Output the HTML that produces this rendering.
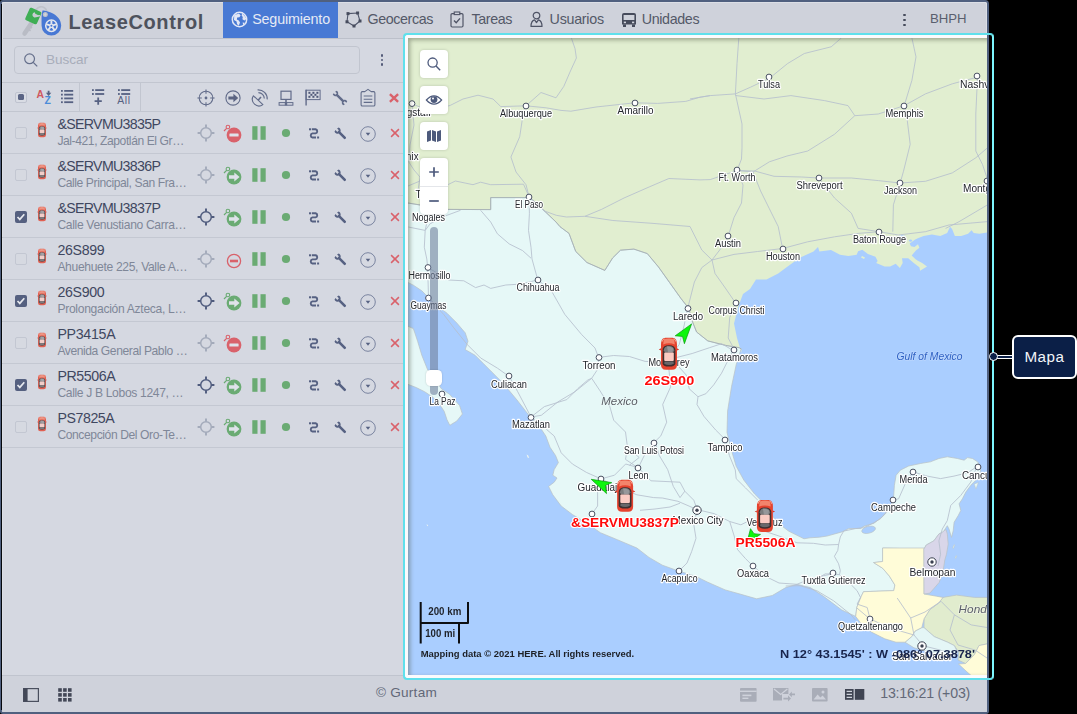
<!DOCTYPE html>
<html><head><meta charset="utf-8"><title>LeaseControl</title>
<style>
*{box-sizing:border-box;margin:0;padding:0}
html,body{width:1077px;height:714px;overflow:hidden;background:#000;font-family:"Liberation Sans",sans-serif;}
.t{position:absolute;white-space:nowrap;}
.a{position:absolute;}
#win{position:absolute;left:0;top:0;width:989px;height:714px;background:#d2d5de;border:2px solid #50607f;border-radius:3px 4px 3px 3px;overflow:hidden;}
#inner{position:absolute;left:-2px;top:-2px;width:989px;height:714px;}
svg{position:absolute;overflow:visible}
</style></head><body>
<div id="win"><div id="inner"><div class="a" style="left:2px;top:2px;width:985px;height:36px;background:#cfd2db"></div><div class="a" style="left:2px;top:38px;width:985px;height:1px;background:#bcc0ca"></div><div class="a" style="left:2px;top:39px;width:985px;height:636px;background:#d5d8e1"></div><div class="a" style="left:2px;top:2px;width:985px;height:710px;border:1px solid #dcdfe6;border-radius:2px"></div><svg style="left:15px;top:0px" width="50" height="40" viewBox="0 0 50 40"><path d="M16.4 23.2L9.6 33.6" stroke="#b9bcc5" stroke-width="4.6" stroke-linecap="round"/><path d="M13.4 29.4l2.2 1.4M15 26.8l2 1.3" stroke="#b9bcc5" stroke-width="1.8"/><path d="M20.6 13.6A5.7 5.7 0 0 1 31.8 11.4V15" fill="none" stroke="#bfc2ca" stroke-width="1.6"/><g transform="rotate(24 18.3 16)"><rect x="11.9" y="9.2" width="12.8" height="13.6" rx="1.6" fill="#3fae55"/></g><path d="M19.4 13.2a1.8 1.8 0 1 0 1.6 3.2l3.4 -.6" fill="#c9ccd4" stroke="#c9ccd4" stroke-width="1.6" stroke-linecap="round"/><path d="M27.5 10.4C33 10.6 46.2 14.6 46.2 25.8A9.8 9.8 0 0 1 26.6 25.8C26.6 20 26.2 14.5 27.5 10.4Z" fill="#4878d4"/><circle cx="30.3" cy="14.6" r="1.9" fill="#d0d3dc" stroke="#bfc2ca" stroke-width="1.2"/><circle cx="36.4" cy="25.8" r="5.7" fill="none" stroke="#e4e7ee" stroke-width="1.5"/><path d="M36.4 25.8L36.40 20.40M36.4 25.8L41.54 24.13M36.4 25.8L39.57 30.17M36.4 25.8L33.23 30.17M36.4 25.8L31.26 24.13" stroke="#e4e7ee" stroke-width="1.9"/><circle cx="36.4" cy="25.8" r="2.1" fill="#e4e7ee"/><circle cx="36.4" cy="25.8" r="1" fill="#4878d4"/></svg><div class="t" style="left:68.5px;top:12.1px;font-size:20px;line-height:20px;color:#4e525d;letter-spacing:0.642px;font-weight:bold;">LeaseControl</div><div class="a" style="left:223px;top:2px;width:115px;height:36px;background:#4879d4"></div><svg style="left:230.5px;top:11px" width="17" height="17" viewBox="0 0 17 17"><circle cx="8.5" cy="8.5" r="7.2" fill="none" stroke="#e3e8f6" stroke-width="1.5"/><path d="M3.2 4.2C5 3 6.6 3.4 8 2.6L9.6 4.4L8.4 6.2L6.2 6.6L5.8 8.6L7.8 9.4L9 11.6L7.8 14.8L6 13L5.6 10.6L3 9Z" fill="#e3e8f6"/><path d="M11.2 2.4L14 5.4L15.4 8L13.4 9.4L11.4 8.2L11.8 6L10.6 4.6Z" fill="#e3e8f6"/><path d="M11.6 11.4l2 .4l-1.2 2.6z" fill="#e3e8f6"/></svg><div class="t" style="left:252.2px;top:9.0px;font-size:14.3px;line-height:20px;color:#e6eaf5;letter-spacing:-0.154px;">Seguimiento</div><svg style="left:344.5px;top:10.5px" width="17" height="17" viewBox="0 0 17 17"><path d="M3 2.6L12.6 2L15 10L9 15L2 10.8Z" fill="none" stroke="#50566a" stroke-width="1.1"/><rect x="1.5" y="1.1" width="3" height="3" fill="#474c5e"/><rect x="11.1" y="0.5" width="3" height="3" fill="#474c5e"/><rect x="13.5" y="8.5" width="3" height="3" fill="#474c5e"/><rect x="7.5" y="13.5" width="3" height="3" fill="#474c5e"/><rect x="0.5" y="9.3" width="3" height="3" fill="#474c5e"/></svg><div class="t" style="left:367.5px;top:9.0px;font-size:14.3px;line-height:20px;color:#545968;letter-spacing:-0.405px;">Geocercas</div><svg style="left:450.3px;top:11px" width="14" height="17" viewBox="0 0 14 17"><path d="M4.4 2.6H2.2Q1 2.6 1 3.8V14.8Q1 16 2.2 16H11.8Q13 16 13 14.8V3.8Q13 2.6 11.8 2.6H9.6" fill="none" stroke="#4f5466" stroke-width="1.2"/><rect x="4.2" y="1" width="5.6" height="2.6" fill="none" stroke="#4f5466" stroke-width="1.1"/><path d="M4 9.6L6.2 11.8L10 7.4" fill="none" stroke="#4f5466" stroke-width="1.4"/></svg><div class="t" style="left:471.5px;top:9.0px;font-size:14.3px;line-height:20px;color:#545968;letter-spacing:-0.403px;">Tareas</div><svg style="left:530px;top:11.2px" width="13" height="17" viewBox="0 0 13 17"><circle cx="6.5" cy="4.6" r="3.3" fill="none" stroke="#4f5466" stroke-width="1.2"/><path d="M1 15.4C1 11 3 9.2 4.6 8.8L6.5 11.6L8.4 8.8C10 9.2 12 11 12 15.4Z" fill="none" stroke="#4f5466" stroke-width="1.2" stroke-linejoin="round"/></svg><div class="t" style="left:549.6px;top:9.0px;font-size:14.3px;line-height:20px;color:#545968;letter-spacing:-0.278px;">Usuarios</div><svg style="left:620.8px;top:12.4px" width="16" height="16" viewBox="0 0 16 16"><path d="M1 3Q1 1 3 1H13Q15 1 15 3V12.4H1Z" fill="#464b5b"/><rect x="2.6" y="3" width="10.8" height="5" fill="#cfd2db"/><rect x="2.8" y="9.6" width="2.2" height="1.6" fill="#cfd2db"/><rect x="11" y="9.6" width="2.2" height="1.6" fill="#cfd2db"/><rect x="2" y="12.4" width="3" height="2.6" fill="#464b5b"/><rect x="11" y="12.4" width="3" height="2.6" fill="#464b5b"/></svg><div class="t" style="left:641.8px;top:9.0px;font-size:14.3px;line-height:20px;color:#545968;letter-spacing:-0.377px;">Unidades</div><div class="a" style="left:903.2px;top:13.7px;width:2.6px;height:2.6px;border-radius:50%;background:#474c5c"></div><div class="a" style="left:903.2px;top:18.6px;width:2.6px;height:2.6px;border-radius:50%;background:#474c5c"></div><div class="a" style="left:903.2px;top:23.5px;width:2.6px;height:2.6px;border-radius:50%;background:#474c5c"></div><div class="t" style="left:930.0px;top:9.2px;font-size:13.2px;line-height:20px;color:#5a5f6e;letter-spacing:-0.044px;">BHPH</div><div class="a" style="left:14px;top:46px;width:346px;height:28px;border:1px solid #c1c5cf;border-radius:4px;background:#d5d8e1"></div><svg style="left:22px;top:51px" width="18" height="18" viewBox="0 0 18 18"><circle cx="7.6" cy="7.8" r="4.9" fill="none" stroke="#66708c" stroke-width="1.2"/><path d="M11.2 11.4L15.2 15.4" stroke="#66708c" stroke-width="1.3"/></svg><div class="t" style="left:46.0px;top:50.0px;font-size:13.6px;line-height:20px;color:#a8adba;letter-spacing:-0.054px;">Buscar</div><div class="a" style="left:380.9px;top:54.35px;width:2.3px;height:2.3px;border-radius:50%;background:#535b78"></div><div class="a" style="left:380.9px;top:58.85px;width:2.3px;height:2.3px;border-radius:50%;background:#535b78"></div><div class="a" style="left:380.9px;top:63.35px;width:2.3px;height:2.3px;border-radius:50%;background:#535b78"></div><div class="a" style="left:2px;top:82px;width:402px;height:1px;background:#c2c6d0"></div><div class="a" style="left:2px;top:111px;width:402px;height:1px;background:#c2c6d0"></div><div class="a" style="left:79px;top:83px;width:1px;height:28px;background:#c2c6d0"></div><div class="a" style="left:140px;top:83px;width:1px;height:28px;background:#c2c6d0"></div><div class="a" style="left:15.2px;top:91.5px;width:11.6px;height:11.6px;border-radius:2px;border:1px solid #bfc3cf;background:#d9dce4"></div><div class="a" style="left:18px;top:94.3px;width:6px;height:6px;border-radius:1.5px;background:#5a6484"></div><div class="t" style="left:36.4px;top:84.8px;font-size:10.4px;line-height:20px;color:#d0585f;letter-spacing:0.089px;font-weight:bold;">A</div><div class="t" style="left:44.6px;top:91.0px;font-size:10.4px;line-height:20px;color:#4a8bd8;letter-spacing:0.648px;font-weight:bold;">Z</div><svg style="left:44px;top:88px" width="10" height="10" viewBox="0 0 10 10"><path d="M4.6 2.8V5.4" stroke="#566182" stroke-width="1.8"/><path d="M1.9 4.8H7.3L4.6 7.9Z" fill="#566182"/></svg><svg style="left:61px;top:89.9px" width="13" height="14" viewBox="0 0 13 14"><rect x="0" y="0" width="1.8" height="1.8" fill="#566182"/><rect x="3.2" y="0" width="9" height="1.8" fill="#566182"/><rect x="0" y="3.75" width="1.8" height="1.8" fill="#566182"/><rect x="3.2" y="3.75" width="9" height="1.8" fill="#566182"/><rect x="0" y="7.5" width="1.8" height="1.8" fill="#566182"/><rect x="3.2" y="7.5" width="9" height="1.8" fill="#566182"/><rect x="0" y="11.3" width="1.8" height="1.8" fill="#566182"/><rect x="3.2" y="11.3" width="9" height="1.8" fill="#566182"/></svg><svg style="left:92px;top:88.9px" width="13" height="17" viewBox="0 0 13 17"><rect x="0" y="0.2" width="1.8" height="1.8" fill="#566182"/><rect x="3.2" y="0.2" width="9" height="1.8" fill="#566182"/><rect x="0" y="4.1" width="1.8" height="1.8" fill="#566182"/><rect x="3.2" y="4.1" width="9" height="1.8" fill="#566182"/><path d="M6.2 8.6V15.8M2.6 12.2H9.8" stroke="#566182" stroke-width="1.8"/></svg><svg style="left:117.6px;top:88.9px" width="13" height="17" viewBox="0 0 13 17"><rect x="0" y="0.2" width="1.8" height="1.8" fill="#566182"/><rect x="3.2" y="0.2" width="9" height="1.8" fill="#566182"/><rect x="0" y="4.1" width="1.8" height="1.8" fill="#566182"/><rect x="3.2" y="4.1" width="9" height="1.8" fill="#566182"/></svg><div class="t" style="left:117.3px;top:90.9px;font-size:10.4px;line-height:20px;color:#566182;letter-spacing:0.547px;">All</div><svg style="left:195.6px;top:87.7px" width="20" height="20" viewBox="-10 -10 20 20"><circle cx="0" cy="0" r="6.8" fill="none" stroke="#626c8a" stroke-width="1.1"/><path d="M-8.6 0H-4.2M4.2 0H8.6M0 -8.6V-4.2M0 4.2V8.6" stroke="#626c8a" stroke-width="1.1"/><circle cx="0" cy="0" r="1.4" fill="#626c8a"/></svg><svg style="left:222.6px;top:87.7px" width="20" height="20" viewBox="-10 -10 20 20"><circle r="7.1" fill="none" stroke="#626c8a" stroke-width="1.1"/><path d="M-4.6 -1.6H0.4V-4.3L5.2 0L0.4 4.3V1.6H-4.6Z" fill="#5b6482"/></svg><svg style="left:248.8px;top:87.7px" width="20" height="20" viewBox="-10 -10 20 20"><path d="M-5.6 -2.2 L3.9 6.6 A6.6 6.6 0 0 1 -5.6 -2.2Z" fill="none" stroke="#626c8a" stroke-width="1.1" stroke-linejoin="round"/><path d="M-0.9 2.2L2 -1" stroke="#626c8a" stroke-width="1.6"/><path d="M-0.6 -5.4A6 6 0 0 1 5.3 0.6" fill="none" stroke="#626c8a" stroke-width="1.2"/><path d="M-1.4 -8.2A9 9 0 0 1 8.2 1.4" fill="none" stroke="#626c8a" stroke-width="1.2"/></svg><svg style="left:276px;top:87.7px" width="20" height="20" viewBox="-10 -10 20 20"><rect x="-5" y="-6.8" width="10" height="8.2" fill="none" stroke="#626c8a" stroke-width="1.2"/><path d="M0 1.4V5" stroke="#626c8a" stroke-width="1.6"/><rect x="-6.9" y="4.6" width="13.8" height="2.6" fill="none" stroke="#626c8a" stroke-width="1"/><rect x="-1.2" y="4.4" width="2.4" height="3" fill="#626c8a"/></svg><svg style="left:302.6px;top:87.7px" width="20" height="20" viewBox="-10 -10 20 20"><path d="M-6.9 -8.3V7.4" stroke="#626c8a" stroke-width="1.4"/><rect x="-6.9" y="-7.8" width="14" height="9.4" fill="none" stroke="#626c8a" stroke-width="1"/><rect x="-4.6" y="-6.2" width="2" height="2" fill="#4f5878"/><rect x="-0.6" y="-6.2" width="2" height="2" fill="#4f5878"/><rect x="3.4" y="-6.2" width="2" height="2" fill="#4f5878"/><rect x="-2.6" y="-4.2" width="2" height="2" fill="#4f5878"/><rect x="1.4" y="-4.2" width="2" height="2" fill="#4f5878"/><rect x="-4.6" y="-2.2" width="2" height="2" fill="#4f5878"/><rect x="-0.6" y="-2.2" width="2" height="2" fill="#4f5878"/><rect x="3.4" y="-2.2" width="2" height="2" fill="#4f5878"/></svg><svg style="left:330.2px;top:87.5px" width="20" height="20" viewBox="-10 -10 20 20"><g transform="rotate(-45) scale(.8)"><rect x="-1.5" y="-6" width="3" height="12" fill="#626c8a"/><path d="M-3.4 -9.4 A3.6 3.6 0 1 0 3.4 -9.4 L1.3 -9.9 V-6.9 H-1.3 V-9.9Z" fill="#626c8a"/><path d="M-3.4 9.4 A3.6 3.6 0 1 1 3.4 9.4 L1.3 9.9 V6.9 H-1.3 V9.9Z" fill="#626c8a"/></g></svg><svg style="left:357.6px;top:87.7px" width="20" height="20" viewBox="-10 -10 20 20"><path d="M-3.2 -6.4H-5.6Q-6.9 -6.4 -6.9 -5.1V6.7Q-6.9 8 -5.6 8H5.6Q6.9 8 6.9 6.7V-5.1Q6.9 -6.4 5.6 -6.4H3.2L0 -8.6Z" fill="none" stroke="#626c8a" stroke-width="1.1" stroke-linejoin="round"/><path d="M-4.3 -2H4.3M-4.3 1.2H4.3M-4.3 4.4H4.3" stroke="#626c8a" stroke-width="1.1"/></svg><svg style="left:384px;top:87.7px" width="20" height="20" viewBox="-10 -10 20 20"><path d="M-4.1 -3.9L4.1 3.9M4.1 -3.9L-4.1 3.9" stroke="#d9626b" stroke-width="2.4"/></svg><div class="a" style="left:2px;top:153px;width:402px;height:1px;background:#c4c8d2"></div><div class="a" style="left:15.2px;top:127px;width:11.6px;height:11.6px;border-radius:2px;border:1px solid #c3c7d2;background:#d6d9e1"></div><svg style="left:35px;top:121px;opacity:.8" width="14" height="18" viewBox="-7 -9 14 18"><g transform="scale(.5 .45)"><g transform="translate(0 0)"><path d="M-8 -9.5Q-8 -16 -3.5 -16H3.5Q8 -16 8 -9.5V11Q8 16 3 16H-3Q-8 16 -8 11Z" fill="#e5432f"/><path d="M-5.2 -14.6Q0 -16.2 5.2 -14.6L5.8 -9.4Q0 -11.8 -5.8 -9.4Z" fill="#f3846c"/><path d="M-8 -5.6L-10.2 -4.4L-8 -3.4Z M8 -5.6L10.2 -4.4L8 -3.4Z" fill="#d6382a"/><path d="M-6.4 -4Q-6.4 -8.4 0 -8.6Q6.4 -8.4 6.4 -4V9.6Q6.4 12.6 0 12.8Q-6.4 12.6 -6.4 9.6Z" fill="#3d2f30"/><path d="M-5.2 -3.6Q-4.6 -7.6 0 -7.7Q4.6 -7.6 5.2 -3.6L4.2 -1.2H-4.2Z" fill="#7c7c7e"/><path d="M-2 -7.2Q2 -7.4 4.2 -5.4L3.4 -1.6H-1Z" fill="#97979a"/><rect x="-4.8" y="-1.2" width="9.6" height="8.4" rx="1" fill="#fbcbc3"/><path d="M-4.4 7.6H4.4L4.8 10Q0 12.6 -4.8 10Z" fill="#68686b"/><path d="M-7 -12Q-6.6 -14.4 -4.6 -15M7 -12Q6.6 -14.4 4.6 -15" fill="none" stroke="#f6a08c" stroke-width="1"/></g></g></svg><div class="t" style="left:57.4px;top:113.8px;font-size:14.2px;line-height:20px;color:#3f4760;letter-spacing:-0.669px;">&amp;SERVMU3835P</div><div class="t" style="left:57.4px;top:130.8px;font-size:12.1px;line-height:20px;color:#7f8798;letter-spacing:-0.417px;">Jal-421, Zapotlán El Gr…</div><svg style="left:195.6px;top:122.9px" width="20" height="20" viewBox="-10 -10 20 20"><circle cx="0" cy="0" r="5.3" fill="none" stroke="#a3aaba" stroke-width="1.5"/><path d="M-8.4 0H-5.6M5.6 0H8.4M0 -8.4V-5.6M0 5.6V8.4" stroke="#a3aaba" stroke-width="1.9"/></svg><svg style="left:222px;top:122.9px" width="24" height="24" viewBox="-12 -12 24 24"><circle r="7.4" fill="#d9626b"/><rect x="-4.6" y="-1.6" width="9.2" height="3.2" rx=".6" fill="#dfe2ea"/><circle cx="-6.1" cy="-8" r="1.8" fill="none" stroke="#d9626b" stroke-width="1.1"/><path d="M-7.4 -6.6L-10 -4" stroke="#d9626b" stroke-width="1.2"/></svg><svg style="left:249.4px;top:122.6px" width="20" height="20" viewBox="-10 -10 20 20"><rect x="-6.7" y="-6.8" width="5.2" height="13.6" fill="#6aab73"/><rect x="1.5" y="-6.8" width="5.2" height="13.6" fill="#6aab73"/></svg><svg style="left:276px;top:122.6px" width="20" height="20" viewBox="-10 -10 20 20"><circle r="4.1" fill="#6aab73"/></svg><svg style="left:304px;top:122.6px" width="20" height="20" viewBox="-10 -10 20 20"><path d="M-2.2 -3.7H1.6A2.1 2.1 0 0 1 1.6 0.4H-1.6A2.1 2.1 0 0 0 -1.6 4.5H2" fill="none" stroke="#566182" stroke-width="1.9"/><rect x="-5" y="-4.7" width="2" height="2" fill="#566182"/><rect x="3.1" y="3.5" width="2" height="2" fill="#566182"/></svg><svg style="left:330.6px;top:124.1px" width="20" height="20" viewBox="-10 -10 20 20"><g transform="rotate(-45) scale(.93)"><rect x="-1.4" y="-3" width="2.8" height="10" rx="1.2" fill="#566182"/><path d="M-3.3 -6.6 A3.5 3.5 0 1 0 3.3 -6.6 L1.2 -7.2 V-4.4 H-1.2 V-7.2Z" fill="#566182"/></g></svg><svg style="left:358px;top:123.5px" width="20" height="20" viewBox="-10 -10 20 20"><circle r="7.3" fill="none" stroke="#7a84a0" stroke-width="1"/><path d="M-2.3 -1.2H2.3L0 1.8Z" fill="#566182"/></svg><svg style="left:385px;top:123.3px" width="20" height="20" viewBox="-10 -10 20 20"><path d="M-3.9 -3.9L3.9 3.9M3.9 -3.9L-3.9 3.9" stroke="#d9626b" stroke-width="1.5"/></svg><div class="a" style="left:2px;top:195px;width:402px;height:1px;background:#c4c8d2"></div><div class="a" style="left:15.2px;top:169px;width:11.6px;height:11.6px;border-radius:2px;border:1px solid #c3c7d2;background:#d6d9e1"></div><svg style="left:35px;top:163px;opacity:.8" width="14" height="18" viewBox="-7 -9 14 18"><g transform="scale(.5 .45)"><g transform="translate(0 0)"><path d="M-8 -9.5Q-8 -16 -3.5 -16H3.5Q8 -16 8 -9.5V11Q8 16 3 16H-3Q-8 16 -8 11Z" fill="#e5432f"/><path d="M-5.2 -14.6Q0 -16.2 5.2 -14.6L5.8 -9.4Q0 -11.8 -5.8 -9.4Z" fill="#f3846c"/><path d="M-8 -5.6L-10.2 -4.4L-8 -3.4Z M8 -5.6L10.2 -4.4L8 -3.4Z" fill="#d6382a"/><path d="M-6.4 -4Q-6.4 -8.4 0 -8.6Q6.4 -8.4 6.4 -4V9.6Q6.4 12.6 0 12.8Q-6.4 12.6 -6.4 9.6Z" fill="#3d2f30"/><path d="M-5.2 -3.6Q-4.6 -7.6 0 -7.7Q4.6 -7.6 5.2 -3.6L4.2 -1.2H-4.2Z" fill="#7c7c7e"/><path d="M-2 -7.2Q2 -7.4 4.2 -5.4L3.4 -1.6H-1Z" fill="#97979a"/><rect x="-4.8" y="-1.2" width="9.6" height="8.4" rx="1" fill="#fbcbc3"/><path d="M-4.4 7.6H4.4L4.8 10Q0 12.6 -4.8 10Z" fill="#68686b"/><path d="M-7 -12Q-6.6 -14.4 -4.6 -15M7 -12Q6.6 -14.4 4.6 -15" fill="none" stroke="#f6a08c" stroke-width="1"/></g></g></svg><div class="t" style="left:57.4px;top:155.8px;font-size:14.2px;line-height:20px;color:#3f4760;letter-spacing:-0.669px;">&amp;SERVMU3836P</div><div class="t" style="left:57.4px;top:172.8px;font-size:12.1px;line-height:20px;color:#7f8798;letter-spacing:-0.408px;">Calle Principal, San Fra…</div><svg style="left:195.6px;top:164.9px" width="20" height="20" viewBox="-10 -10 20 20"><circle cx="0" cy="0" r="5.3" fill="none" stroke="#a3aaba" stroke-width="1.5"/><path d="M-8.4 0H-5.6M5.6 0H8.4M0 -8.4V-5.6M0 5.6V8.4" stroke="#a3aaba" stroke-width="1.9"/></svg><svg style="left:222px;top:164.9px" width="24" height="24" viewBox="-12 -12 24 24"><circle r="7.4" fill="#6aab73"/><path d="M-5 -1.8H0.3V-4.6L5.6 0L0.3 4.6V1.8H-5Z" fill="#dfe2ea"/><circle cx="-6.1" cy="-8" r="1.8" fill="none" stroke="#6aab73" stroke-width="1.1"/><path d="M-7.4 -6.6L-10 -4" stroke="#6aab73" stroke-width="1.2"/></svg><svg style="left:249.4px;top:164.6px" width="20" height="20" viewBox="-10 -10 20 20"><rect x="-6.7" y="-6.8" width="5.2" height="13.6" fill="#6aab73"/><rect x="1.5" y="-6.8" width="5.2" height="13.6" fill="#6aab73"/></svg><svg style="left:276px;top:164.6px" width="20" height="20" viewBox="-10 -10 20 20"><circle r="4.1" fill="#6aab73"/></svg><svg style="left:304px;top:164.6px" width="20" height="20" viewBox="-10 -10 20 20"><path d="M-2.2 -3.7H1.6A2.1 2.1 0 0 1 1.6 0.4H-1.6A2.1 2.1 0 0 0 -1.6 4.5H2" fill="none" stroke="#566182" stroke-width="1.9"/><rect x="-5" y="-4.7" width="2" height="2" fill="#566182"/><rect x="3.1" y="3.5" width="2" height="2" fill="#566182"/></svg><svg style="left:330.6px;top:166.1px" width="20" height="20" viewBox="-10 -10 20 20"><g transform="rotate(-45) scale(.93)"><rect x="-1.4" y="-3" width="2.8" height="10" rx="1.2" fill="#566182"/><path d="M-3.3 -6.6 A3.5 3.5 0 1 0 3.3 -6.6 L1.2 -7.2 V-4.4 H-1.2 V-7.2Z" fill="#566182"/></g></svg><svg style="left:358px;top:165.5px" width="20" height="20" viewBox="-10 -10 20 20"><circle r="7.3" fill="none" stroke="#7a84a0" stroke-width="1"/><path d="M-2.3 -1.2H2.3L0 1.8Z" fill="#566182"/></svg><svg style="left:385px;top:165.3px" width="20" height="20" viewBox="-10 -10 20 20"><path d="M-3.9 -3.9L3.9 3.9M3.9 -3.9L-3.9 3.9" stroke="#d9626b" stroke-width="1.5"/></svg><div class="a" style="left:2px;top:237px;width:402px;height:1px;background:#c4c8d2"></div><div class="a" style="left:15.2px;top:211px;width:11.6px;height:11.6px;border-radius:2px;background:#556080"></div><svg style="left:15.2px;top:211px" width="12" height="12" viewBox="0 0 12 12"><path d="M2.5 6L4.8 8.4L9.3 3.3" fill="none" stroke="#e6e8ee" stroke-width="1.7"/></svg><svg style="left:35px;top:205px;opacity:.8" width="14" height="18" viewBox="-7 -9 14 18"><g transform="scale(.5 .45)"><g transform="translate(0 0)"><path d="M-8 -9.5Q-8 -16 -3.5 -16H3.5Q8 -16 8 -9.5V11Q8 16 3 16H-3Q-8 16 -8 11Z" fill="#e5432f"/><path d="M-5.2 -14.6Q0 -16.2 5.2 -14.6L5.8 -9.4Q0 -11.8 -5.8 -9.4Z" fill="#f3846c"/><path d="M-8 -5.6L-10.2 -4.4L-8 -3.4Z M8 -5.6L10.2 -4.4L8 -3.4Z" fill="#d6382a"/><path d="M-6.4 -4Q-6.4 -8.4 0 -8.6Q6.4 -8.4 6.4 -4V9.6Q6.4 12.6 0 12.8Q-6.4 12.6 -6.4 9.6Z" fill="#3d2f30"/><path d="M-5.2 -3.6Q-4.6 -7.6 0 -7.7Q4.6 -7.6 5.2 -3.6L4.2 -1.2H-4.2Z" fill="#7c7c7e"/><path d="M-2 -7.2Q2 -7.4 4.2 -5.4L3.4 -1.6H-1Z" fill="#97979a"/><rect x="-4.8" y="-1.2" width="9.6" height="8.4" rx="1" fill="#fbcbc3"/><path d="M-4.4 7.6H4.4L4.8 10Q0 12.6 -4.8 10Z" fill="#68686b"/><path d="M-7 -12Q-6.6 -14.4 -4.6 -15M7 -12Q6.6 -14.4 4.6 -15" fill="none" stroke="#f6a08c" stroke-width="1"/></g></g></svg><div class="t" style="left:57.4px;top:197.8px;font-size:14.2px;line-height:20px;color:#3f4760;letter-spacing:-0.669px;">&amp;SERVMU3837P</div><div class="t" style="left:57.4px;top:214.8px;font-size:12.1px;line-height:20px;color:#7f8798;letter-spacing:-0.327px;">Calle Venustiano Carra…</div><svg style="left:195.6px;top:206.9px" width="20" height="20" viewBox="-10 -10 20 20"><circle cx="0" cy="0" r="5.3" fill="none" stroke="#4f5b7d" stroke-width="1.5"/><path d="M-8.4 0H-5.6M5.6 0H8.4M0 -8.4V-5.6M0 5.6V8.4" stroke="#4f5b7d" stroke-width="1.9"/></svg><svg style="left:222px;top:206.9px" width="24" height="24" viewBox="-12 -12 24 24"><circle r="7.4" fill="#6aab73"/><path d="M-5 -1.8H0.3V-4.6L5.6 0L0.3 4.6V1.8H-5Z" fill="#dfe2ea"/><circle cx="-6.1" cy="-8" r="1.8" fill="none" stroke="#6aab73" stroke-width="1.1"/><path d="M-7.4 -6.6L-10 -4" stroke="#6aab73" stroke-width="1.2"/></svg><svg style="left:249.4px;top:206.6px" width="20" height="20" viewBox="-10 -10 20 20"><rect x="-6.7" y="-6.8" width="5.2" height="13.6" fill="#6aab73"/><rect x="1.5" y="-6.8" width="5.2" height="13.6" fill="#6aab73"/></svg><svg style="left:276px;top:206.6px" width="20" height="20" viewBox="-10 -10 20 20"><circle r="4.1" fill="#6aab73"/></svg><svg style="left:304px;top:206.6px" width="20" height="20" viewBox="-10 -10 20 20"><path d="M-2.2 -3.7H1.6A2.1 2.1 0 0 1 1.6 0.4H-1.6A2.1 2.1 0 0 0 -1.6 4.5H2" fill="none" stroke="#566182" stroke-width="1.9"/><rect x="-5" y="-4.7" width="2" height="2" fill="#566182"/><rect x="3.1" y="3.5" width="2" height="2" fill="#566182"/></svg><svg style="left:330.6px;top:208.1px" width="20" height="20" viewBox="-10 -10 20 20"><g transform="rotate(-45) scale(.93)"><rect x="-1.4" y="-3" width="2.8" height="10" rx="1.2" fill="#566182"/><path d="M-3.3 -6.6 A3.5 3.5 0 1 0 3.3 -6.6 L1.2 -7.2 V-4.4 H-1.2 V-7.2Z" fill="#566182"/></g></svg><svg style="left:358px;top:207.5px" width="20" height="20" viewBox="-10 -10 20 20"><circle r="7.3" fill="none" stroke="#7a84a0" stroke-width="1"/><path d="M-2.3 -1.2H2.3L0 1.8Z" fill="#566182"/></svg><svg style="left:385px;top:207.3px" width="20" height="20" viewBox="-10 -10 20 20"><path d="M-3.9 -3.9L3.9 3.9M3.9 -3.9L-3.9 3.9" stroke="#d9626b" stroke-width="1.5"/></svg><div class="a" style="left:2px;top:279px;width:402px;height:1px;background:#c4c8d2"></div><div class="a" style="left:15.2px;top:253px;width:11.6px;height:11.6px;border-radius:2px;border:1px solid #c3c7d2;background:#d6d9e1"></div><svg style="left:35px;top:247px;opacity:.8" width="14" height="18" viewBox="-7 -9 14 18"><g transform="scale(.5 .45)"><g transform="translate(0 0)"><path d="M-8 -9.5Q-8 -16 -3.5 -16H3.5Q8 -16 8 -9.5V11Q8 16 3 16H-3Q-8 16 -8 11Z" fill="#e5432f"/><path d="M-5.2 -14.6Q0 -16.2 5.2 -14.6L5.8 -9.4Q0 -11.8 -5.8 -9.4Z" fill="#f3846c"/><path d="M-8 -5.6L-10.2 -4.4L-8 -3.4Z M8 -5.6L10.2 -4.4L8 -3.4Z" fill="#d6382a"/><path d="M-6.4 -4Q-6.4 -8.4 0 -8.6Q6.4 -8.4 6.4 -4V9.6Q6.4 12.6 0 12.8Q-6.4 12.6 -6.4 9.6Z" fill="#3d2f30"/><path d="M-5.2 -3.6Q-4.6 -7.6 0 -7.7Q4.6 -7.6 5.2 -3.6L4.2 -1.2H-4.2Z" fill="#7c7c7e"/><path d="M-2 -7.2Q2 -7.4 4.2 -5.4L3.4 -1.6H-1Z" fill="#97979a"/><rect x="-4.8" y="-1.2" width="9.6" height="8.4" rx="1" fill="#fbcbc3"/><path d="M-4.4 7.6H4.4L4.8 10Q0 12.6 -4.8 10Z" fill="#68686b"/><path d="M-7 -12Q-6.6 -14.4 -4.6 -15M7 -12Q6.6 -14.4 4.6 -15" fill="none" stroke="#f6a08c" stroke-width="1"/></g></g></svg><div class="t" style="left:57.4px;top:239.8px;font-size:14.2px;line-height:20px;color:#3f4760;letter-spacing:-0.326px;">26S899</div><div class="t" style="left:57.4px;top:256.8px;font-size:12.1px;line-height:20px;color:#7f8798;letter-spacing:-0.334px;">Ahuehuete 225, Valle A…</div><svg style="left:195.6px;top:248.9px" width="20" height="20" viewBox="-10 -10 20 20"><circle cx="0" cy="0" r="5.3" fill="none" stroke="#a3aaba" stroke-width="1.5"/><path d="M-8.4 0H-5.6M5.6 0H8.4M0 -8.4V-5.6M0 5.6V8.4" stroke="#a3aaba" stroke-width="1.9"/></svg><svg style="left:222px;top:248.9px" width="24" height="24" viewBox="-12 -12 24 24"><circle r="6.6" fill="none" stroke="#d9626b" stroke-width="1.3"/><rect x="-4" y="-1.3" width="8" height="2.6" fill="#d9626b"/></svg><svg style="left:249.4px;top:248.6px" width="20" height="20" viewBox="-10 -10 20 20"><rect x="-6.7" y="-6.8" width="5.2" height="13.6" fill="#6aab73"/><rect x="1.5" y="-6.8" width="5.2" height="13.6" fill="#6aab73"/></svg><svg style="left:276px;top:248.6px" width="20" height="20" viewBox="-10 -10 20 20"><circle r="4.1" fill="#6aab73"/></svg><svg style="left:304px;top:248.6px" width="20" height="20" viewBox="-10 -10 20 20"><path d="M-2.2 -3.7H1.6A2.1 2.1 0 0 1 1.6 0.4H-1.6A2.1 2.1 0 0 0 -1.6 4.5H2" fill="none" stroke="#566182" stroke-width="1.9"/><rect x="-5" y="-4.7" width="2" height="2" fill="#566182"/><rect x="3.1" y="3.5" width="2" height="2" fill="#566182"/></svg><svg style="left:330.6px;top:250.1px" width="20" height="20" viewBox="-10 -10 20 20"><g transform="rotate(-45) scale(.93)"><rect x="-1.4" y="-3" width="2.8" height="10" rx="1.2" fill="#566182"/><path d="M-3.3 -6.6 A3.5 3.5 0 1 0 3.3 -6.6 L1.2 -7.2 V-4.4 H-1.2 V-7.2Z" fill="#566182"/></g></svg><svg style="left:358px;top:249.5px" width="20" height="20" viewBox="-10 -10 20 20"><circle r="7.3" fill="none" stroke="#7a84a0" stroke-width="1"/><path d="M-2.3 -1.2H2.3L0 1.8Z" fill="#566182"/></svg><svg style="left:385px;top:249.3px" width="20" height="20" viewBox="-10 -10 20 20"><path d="M-3.9 -3.9L3.9 3.9M3.9 -3.9L-3.9 3.9" stroke="#d9626b" stroke-width="1.5"/></svg><div class="a" style="left:2px;top:321px;width:402px;height:1px;background:#c4c8d2"></div><div class="a" style="left:15.2px;top:295px;width:11.6px;height:11.6px;border-radius:2px;background:#556080"></div><svg style="left:15.2px;top:295px" width="12" height="12" viewBox="0 0 12 12"><path d="M2.5 6L4.8 8.4L9.3 3.3" fill="none" stroke="#e6e8ee" stroke-width="1.7"/></svg><svg style="left:35px;top:289px;opacity:.8" width="14" height="18" viewBox="-7 -9 14 18"><g transform="scale(.5 .45)"><g transform="translate(0 0)"><path d="M-8 -9.5Q-8 -16 -3.5 -16H3.5Q8 -16 8 -9.5V11Q8 16 3 16H-3Q-8 16 -8 11Z" fill="#e5432f"/><path d="M-5.2 -14.6Q0 -16.2 5.2 -14.6L5.8 -9.4Q0 -11.8 -5.8 -9.4Z" fill="#f3846c"/><path d="M-8 -5.6L-10.2 -4.4L-8 -3.4Z M8 -5.6L10.2 -4.4L8 -3.4Z" fill="#d6382a"/><path d="M-6.4 -4Q-6.4 -8.4 0 -8.6Q6.4 -8.4 6.4 -4V9.6Q6.4 12.6 0 12.8Q-6.4 12.6 -6.4 9.6Z" fill="#3d2f30"/><path d="M-5.2 -3.6Q-4.6 -7.6 0 -7.7Q4.6 -7.6 5.2 -3.6L4.2 -1.2H-4.2Z" fill="#7c7c7e"/><path d="M-2 -7.2Q2 -7.4 4.2 -5.4L3.4 -1.6H-1Z" fill="#97979a"/><rect x="-4.8" y="-1.2" width="9.6" height="8.4" rx="1" fill="#fbcbc3"/><path d="M-4.4 7.6H4.4L4.8 10Q0 12.6 -4.8 10Z" fill="#68686b"/><path d="M-7 -12Q-6.6 -14.4 -4.6 -15M7 -12Q6.6 -14.4 4.6 -15" fill="none" stroke="#f6a08c" stroke-width="1"/></g></g></svg><div class="t" style="left:57.4px;top:281.8px;font-size:14.2px;line-height:20px;color:#3f4760;letter-spacing:-0.326px;">26S900</div><div class="t" style="left:57.4px;top:298.8px;font-size:12.1px;line-height:20px;color:#7f8798;letter-spacing:-0.298px;">Prolongación Azteca, L…</div><svg style="left:195.6px;top:290.9px" width="20" height="20" viewBox="-10 -10 20 20"><circle cx="0" cy="0" r="5.3" fill="none" stroke="#4f5b7d" stroke-width="1.5"/><path d="M-8.4 0H-5.6M5.6 0H8.4M0 -8.4V-5.6M0 5.6V8.4" stroke="#4f5b7d" stroke-width="1.9"/></svg><svg style="left:222px;top:290.9px" width="24" height="24" viewBox="-12 -12 24 24"><circle r="7.4" fill="#6aab73"/><path d="M-5 -1.8H0.3V-4.6L5.6 0L0.3 4.6V1.8H-5Z" fill="#dfe2ea"/><circle cx="-6.1" cy="-8" r="1.8" fill="none" stroke="#6aab73" stroke-width="1.1"/><path d="M-7.4 -6.6L-10 -4" stroke="#6aab73" stroke-width="1.2"/></svg><svg style="left:249.4px;top:290.6px" width="20" height="20" viewBox="-10 -10 20 20"><rect x="-6.7" y="-6.8" width="5.2" height="13.6" fill="#6aab73"/><rect x="1.5" y="-6.8" width="5.2" height="13.6" fill="#6aab73"/></svg><svg style="left:276px;top:290.6px" width="20" height="20" viewBox="-10 -10 20 20"><circle r="4.1" fill="#6aab73"/></svg><svg style="left:304px;top:290.6px" width="20" height="20" viewBox="-10 -10 20 20"><path d="M-2.2 -3.7H1.6A2.1 2.1 0 0 1 1.6 0.4H-1.6A2.1 2.1 0 0 0 -1.6 4.5H2" fill="none" stroke="#566182" stroke-width="1.9"/><rect x="-5" y="-4.7" width="2" height="2" fill="#566182"/><rect x="3.1" y="3.5" width="2" height="2" fill="#566182"/></svg><svg style="left:330.6px;top:292.1px" width="20" height="20" viewBox="-10 -10 20 20"><g transform="rotate(-45) scale(.93)"><rect x="-1.4" y="-3" width="2.8" height="10" rx="1.2" fill="#566182"/><path d="M-3.3 -6.6 A3.5 3.5 0 1 0 3.3 -6.6 L1.2 -7.2 V-4.4 H-1.2 V-7.2Z" fill="#566182"/></g></svg><svg style="left:358px;top:291.5px" width="20" height="20" viewBox="-10 -10 20 20"><circle r="7.3" fill="none" stroke="#7a84a0" stroke-width="1"/><path d="M-2.3 -1.2H2.3L0 1.8Z" fill="#566182"/></svg><svg style="left:385px;top:291.3px" width="20" height="20" viewBox="-10 -10 20 20"><path d="M-3.9 -3.9L3.9 3.9M3.9 -3.9L-3.9 3.9" stroke="#d9626b" stroke-width="1.5"/></svg><div class="a" style="left:2px;top:363px;width:402px;height:1px;background:#c4c8d2"></div><div class="a" style="left:15.2px;top:337px;width:11.6px;height:11.6px;border-radius:2px;border:1px solid #c3c7d2;background:#d6d9e1"></div><svg style="left:35px;top:331px;opacity:.8" width="14" height="18" viewBox="-7 -9 14 18"><g transform="scale(.5 .45)"><g transform="translate(0 0)"><path d="M-8 -9.5Q-8 -16 -3.5 -16H3.5Q8 -16 8 -9.5V11Q8 16 3 16H-3Q-8 16 -8 11Z" fill="#e5432f"/><path d="M-5.2 -14.6Q0 -16.2 5.2 -14.6L5.8 -9.4Q0 -11.8 -5.8 -9.4Z" fill="#f3846c"/><path d="M-8 -5.6L-10.2 -4.4L-8 -3.4Z M8 -5.6L10.2 -4.4L8 -3.4Z" fill="#d6382a"/><path d="M-6.4 -4Q-6.4 -8.4 0 -8.6Q6.4 -8.4 6.4 -4V9.6Q6.4 12.6 0 12.8Q-6.4 12.6 -6.4 9.6Z" fill="#3d2f30"/><path d="M-5.2 -3.6Q-4.6 -7.6 0 -7.7Q4.6 -7.6 5.2 -3.6L4.2 -1.2H-4.2Z" fill="#7c7c7e"/><path d="M-2 -7.2Q2 -7.4 4.2 -5.4L3.4 -1.6H-1Z" fill="#97979a"/><rect x="-4.8" y="-1.2" width="9.6" height="8.4" rx="1" fill="#fbcbc3"/><path d="M-4.4 7.6H4.4L4.8 10Q0 12.6 -4.8 10Z" fill="#68686b"/><path d="M-7 -12Q-6.6 -14.4 -4.6 -15M7 -12Q6.6 -14.4 4.6 -15" fill="none" stroke="#f6a08c" stroke-width="1"/></g></g></svg><div class="t" style="left:57.4px;top:323.8px;font-size:14.2px;line-height:20px;color:#3f4760;letter-spacing:-0.286px;">PP3415A</div><div class="t" style="left:57.4px;top:340.8px;font-size:12.1px;line-height:20px;color:#7f8798;letter-spacing:-0.421px;">Avenida General Pablo …</div><svg style="left:195.6px;top:332.9px" width="20" height="20" viewBox="-10 -10 20 20"><circle cx="0" cy="0" r="5.3" fill="none" stroke="#a3aaba" stroke-width="1.5"/><path d="M-8.4 0H-5.6M5.6 0H8.4M0 -8.4V-5.6M0 5.6V8.4" stroke="#a3aaba" stroke-width="1.9"/></svg><svg style="left:222px;top:332.9px" width="24" height="24" viewBox="-12 -12 24 24"><circle r="7.4" fill="#d9626b"/><rect x="-4.6" y="-1.6" width="9.2" height="3.2" rx=".6" fill="#dfe2ea"/><circle cx="-6.1" cy="-8" r="1.8" fill="none" stroke="#d9626b" stroke-width="1.1"/><path d="M-7.4 -6.6L-10 -4" stroke="#d9626b" stroke-width="1.2"/></svg><svg style="left:249.4px;top:332.6px" width="20" height="20" viewBox="-10 -10 20 20"><rect x="-6.7" y="-6.8" width="5.2" height="13.6" fill="#6aab73"/><rect x="1.5" y="-6.8" width="5.2" height="13.6" fill="#6aab73"/></svg><svg style="left:276px;top:332.6px" width="20" height="20" viewBox="-10 -10 20 20"><circle r="4.1" fill="#6aab73"/></svg><svg style="left:304px;top:332.6px" width="20" height="20" viewBox="-10 -10 20 20"><path d="M-2.2 -3.7H1.6A2.1 2.1 0 0 1 1.6 0.4H-1.6A2.1 2.1 0 0 0 -1.6 4.5H2" fill="none" stroke="#566182" stroke-width="1.9"/><rect x="-5" y="-4.7" width="2" height="2" fill="#566182"/><rect x="3.1" y="3.5" width="2" height="2" fill="#566182"/></svg><svg style="left:330.6px;top:334.1px" width="20" height="20" viewBox="-10 -10 20 20"><g transform="rotate(-45) scale(.93)"><rect x="-1.4" y="-3" width="2.8" height="10" rx="1.2" fill="#566182"/><path d="M-3.3 -6.6 A3.5 3.5 0 1 0 3.3 -6.6 L1.2 -7.2 V-4.4 H-1.2 V-7.2Z" fill="#566182"/></g></svg><svg style="left:358px;top:333.5px" width="20" height="20" viewBox="-10 -10 20 20"><circle r="7.3" fill="none" stroke="#7a84a0" stroke-width="1"/><path d="M-2.3 -1.2H2.3L0 1.8Z" fill="#566182"/></svg><svg style="left:385px;top:333.3px" width="20" height="20" viewBox="-10 -10 20 20"><path d="M-3.9 -3.9L3.9 3.9M3.9 -3.9L-3.9 3.9" stroke="#d9626b" stroke-width="1.5"/></svg><div class="a" style="left:2px;top:405px;width:402px;height:1px;background:#c4c8d2"></div><div class="a" style="left:15.2px;top:379px;width:11.6px;height:11.6px;border-radius:2px;background:#556080"></div><svg style="left:15.2px;top:379px" width="12" height="12" viewBox="0 0 12 12"><path d="M2.5 6L4.8 8.4L9.3 3.3" fill="none" stroke="#e6e8ee" stroke-width="1.7"/></svg><svg style="left:35px;top:373px;opacity:.8" width="14" height="18" viewBox="-7 -9 14 18"><g transform="scale(.5 .45)"><g transform="translate(0 0)"><path d="M-8 -9.5Q-8 -16 -3.5 -16H3.5Q8 -16 8 -9.5V11Q8 16 3 16H-3Q-8 16 -8 11Z" fill="#e5432f"/><path d="M-5.2 -14.6Q0 -16.2 5.2 -14.6L5.8 -9.4Q0 -11.8 -5.8 -9.4Z" fill="#f3846c"/><path d="M-8 -5.6L-10.2 -4.4L-8 -3.4Z M8 -5.6L10.2 -4.4L8 -3.4Z" fill="#d6382a"/><path d="M-6.4 -4Q-6.4 -8.4 0 -8.6Q6.4 -8.4 6.4 -4V9.6Q6.4 12.6 0 12.8Q-6.4 12.6 -6.4 9.6Z" fill="#3d2f30"/><path d="M-5.2 -3.6Q-4.6 -7.6 0 -7.7Q4.6 -7.6 5.2 -3.6L4.2 -1.2H-4.2Z" fill="#7c7c7e"/><path d="M-2 -7.2Q2 -7.4 4.2 -5.4L3.4 -1.6H-1Z" fill="#97979a"/><rect x="-4.8" y="-1.2" width="9.6" height="8.4" rx="1" fill="#fbcbc3"/><path d="M-4.4 7.6H4.4L4.8 10Q0 12.6 -4.8 10Z" fill="#68686b"/><path d="M-7 -12Q-6.6 -14.4 -4.6 -15M7 -12Q6.6 -14.4 4.6 -15" fill="none" stroke="#f6a08c" stroke-width="1"/></g></g></svg><div class="t" style="left:57.4px;top:365.8px;font-size:14.2px;line-height:20px;color:#3f4760;letter-spacing:-0.398px;">PR5506A</div><div class="t" style="left:57.4px;top:382.8px;font-size:12.1px;line-height:20px;color:#7f8798;letter-spacing:-0.341px;">Calle J B Lobos 1247, …</div><svg style="left:195.6px;top:374.9px" width="20" height="20" viewBox="-10 -10 20 20"><circle cx="0" cy="0" r="5.3" fill="none" stroke="#4f5b7d" stroke-width="1.5"/><path d="M-8.4 0H-5.6M5.6 0H8.4M0 -8.4V-5.6M0 5.6V8.4" stroke="#4f5b7d" stroke-width="1.9"/></svg><svg style="left:222px;top:374.9px" width="24" height="24" viewBox="-12 -12 24 24"><circle r="7.4" fill="#6aab73"/><path d="M-5 -1.8H0.3V-4.6L5.6 0L0.3 4.6V1.8H-5Z" fill="#dfe2ea"/><circle cx="-6.1" cy="-8" r="1.8" fill="none" stroke="#6aab73" stroke-width="1.1"/><path d="M-7.4 -6.6L-10 -4" stroke="#6aab73" stroke-width="1.2"/></svg><svg style="left:249.4px;top:374.6px" width="20" height="20" viewBox="-10 -10 20 20"><rect x="-6.7" y="-6.8" width="5.2" height="13.6" fill="#6aab73"/><rect x="1.5" y="-6.8" width="5.2" height="13.6" fill="#6aab73"/></svg><svg style="left:276px;top:374.6px" width="20" height="20" viewBox="-10 -10 20 20"><circle r="4.1" fill="#6aab73"/></svg><svg style="left:304px;top:374.6px" width="20" height="20" viewBox="-10 -10 20 20"><path d="M-2.2 -3.7H1.6A2.1 2.1 0 0 1 1.6 0.4H-1.6A2.1 2.1 0 0 0 -1.6 4.5H2" fill="none" stroke="#566182" stroke-width="1.9"/><rect x="-5" y="-4.7" width="2" height="2" fill="#566182"/><rect x="3.1" y="3.5" width="2" height="2" fill="#566182"/></svg><svg style="left:330.6px;top:376.1px" width="20" height="20" viewBox="-10 -10 20 20"><g transform="rotate(-45) scale(.93)"><rect x="-1.4" y="-3" width="2.8" height="10" rx="1.2" fill="#566182"/><path d="M-3.3 -6.6 A3.5 3.5 0 1 0 3.3 -6.6 L1.2 -7.2 V-4.4 H-1.2 V-7.2Z" fill="#566182"/></g></svg><svg style="left:358px;top:375.5px" width="20" height="20" viewBox="-10 -10 20 20"><circle r="7.3" fill="none" stroke="#7a84a0" stroke-width="1"/><path d="M-2.3 -1.2H2.3L0 1.8Z" fill="#566182"/></svg><svg style="left:385px;top:375.3px" width="20" height="20" viewBox="-10 -10 20 20"><path d="M-3.9 -3.9L3.9 3.9M3.9 -3.9L-3.9 3.9" stroke="#d9626b" stroke-width="1.5"/></svg><div class="a" style="left:2px;top:447px;width:402px;height:1px;background:#c4c8d2"></div><div class="a" style="left:15.2px;top:421px;width:11.6px;height:11.6px;border-radius:2px;border:1px solid #c3c7d2;background:#d6d9e1"></div><svg style="left:35px;top:415px;opacity:.8" width="14" height="18" viewBox="-7 -9 14 18"><g transform="scale(.5 .45)"><g transform="translate(0 0)"><path d="M-8 -9.5Q-8 -16 -3.5 -16H3.5Q8 -16 8 -9.5V11Q8 16 3 16H-3Q-8 16 -8 11Z" fill="#e5432f"/><path d="M-5.2 -14.6Q0 -16.2 5.2 -14.6L5.8 -9.4Q0 -11.8 -5.8 -9.4Z" fill="#f3846c"/><path d="M-8 -5.6L-10.2 -4.4L-8 -3.4Z M8 -5.6L10.2 -4.4L8 -3.4Z" fill="#d6382a"/><path d="M-6.4 -4Q-6.4 -8.4 0 -8.6Q6.4 -8.4 6.4 -4V9.6Q6.4 12.6 0 12.8Q-6.4 12.6 -6.4 9.6Z" fill="#3d2f30"/><path d="M-5.2 -3.6Q-4.6 -7.6 0 -7.7Q4.6 -7.6 5.2 -3.6L4.2 -1.2H-4.2Z" fill="#7c7c7e"/><path d="M-2 -7.2Q2 -7.4 4.2 -5.4L3.4 -1.6H-1Z" fill="#97979a"/><rect x="-4.8" y="-1.2" width="9.6" height="8.4" rx="1" fill="#fbcbc3"/><path d="M-4.4 7.6H4.4L4.8 10Q0 12.6 -4.8 10Z" fill="#68686b"/><path d="M-7 -12Q-6.6 -14.4 -4.6 -15M7 -12Q6.6 -14.4 4.6 -15" fill="none" stroke="#f6a08c" stroke-width="1"/></g></g></svg><div class="t" style="left:57.4px;top:407.8px;font-size:14.2px;line-height:20px;color:#3f4760;letter-spacing:-0.429px;">PS7825A</div><div class="t" style="left:57.4px;top:424.8px;font-size:12.1px;line-height:20px;color:#7f8798;letter-spacing:-0.402px;">Concepción Del Oro-Te…</div><svg style="left:195.6px;top:416.9px" width="20" height="20" viewBox="-10 -10 20 20"><circle cx="0" cy="0" r="5.3" fill="none" stroke="#a3aaba" stroke-width="1.5"/><path d="M-8.4 0H-5.6M5.6 0H8.4M0 -8.4V-5.6M0 5.6V8.4" stroke="#a3aaba" stroke-width="1.9"/></svg><svg style="left:222px;top:416.9px" width="24" height="24" viewBox="-12 -12 24 24"><circle r="7.4" fill="#6aab73"/><path d="M-5 -1.8H0.3V-4.6L5.6 0L0.3 4.6V1.8H-5Z" fill="#dfe2ea"/><circle cx="-6.1" cy="-8" r="1.8" fill="none" stroke="#6aab73" stroke-width="1.1"/><path d="M-7.4 -6.6L-10 -4" stroke="#6aab73" stroke-width="1.2"/></svg><svg style="left:249.4px;top:416.6px" width="20" height="20" viewBox="-10 -10 20 20"><rect x="-6.7" y="-6.8" width="5.2" height="13.6" fill="#6aab73"/><rect x="1.5" y="-6.8" width="5.2" height="13.6" fill="#6aab73"/></svg><svg style="left:276px;top:416.6px" width="20" height="20" viewBox="-10 -10 20 20"><circle r="4.1" fill="#6aab73"/></svg><svg style="left:304px;top:416.6px" width="20" height="20" viewBox="-10 -10 20 20"><path d="M-2.2 -3.7H1.6A2.1 2.1 0 0 1 1.6 0.4H-1.6A2.1 2.1 0 0 0 -1.6 4.5H2" fill="none" stroke="#566182" stroke-width="1.9"/><rect x="-5" y="-4.7" width="2" height="2" fill="#566182"/><rect x="3.1" y="3.5" width="2" height="2" fill="#566182"/></svg><svg style="left:330.6px;top:418.1px" width="20" height="20" viewBox="-10 -10 20 20"><g transform="rotate(-45) scale(.93)"><rect x="-1.4" y="-3" width="2.8" height="10" rx="1.2" fill="#566182"/><path d="M-3.3 -6.6 A3.5 3.5 0 1 0 3.3 -6.6 L1.2 -7.2 V-4.4 H-1.2 V-7.2Z" fill="#566182"/></g></svg><svg style="left:358px;top:417.5px" width="20" height="20" viewBox="-10 -10 20 20"><circle r="7.3" fill="none" stroke="#7a84a0" stroke-width="1"/><path d="M-2.3 -1.2H2.3L0 1.8Z" fill="#566182"/></svg><svg style="left:385px;top:417.3px" width="20" height="20" viewBox="-10 -10 20 20"><path d="M-3.9 -3.9L3.9 3.9M3.9 -3.9L-3.9 3.9" stroke="#d9626b" stroke-width="1.5"/></svg><div class="a" style="left:2px;top:675px;width:985px;height:1px;background:#c0c4ce"></div><div class="a" style="left:2px;top:676px;width:985px;height:36px;background:#cfd2db"></div><svg style="left:23px;top:688px" width="16" height="14" viewBox="0 0 16 14"><rect x=".6" y=".6" width="14.8" height="12.8" fill="none" stroke="#4a4f5e" stroke-width="1.2"/><rect x=".6" y=".6" width="4" height="12.8" fill="#434857"/></svg><svg style="left:58px;top:688px" width="14" height="14" viewBox="0 0 14 14"><rect x="0.2" y="0.2" width="3.6" height="3.6" fill="#434857"/><rect x="5.1" y="0.2" width="3.6" height="3.6" fill="#434857"/><rect x="10" y="0.2" width="3.6" height="3.6" fill="#434857"/><rect x="0.2" y="5.1" width="3.6" height="3.6" fill="#434857"/><rect x="5.1" y="5.1" width="3.6" height="3.6" fill="#434857"/><rect x="10" y="5.1" width="3.6" height="3.6" fill="#434857"/><rect x="0.2" y="10" width="3.6" height="3.6" fill="#434857"/><rect x="5.1" y="10" width="3.6" height="3.6" fill="#434857"/><rect x="10" y="10" width="3.6" height="3.6" fill="#434857"/></svg><div class="t" style="left:376.0px;top:683.0px;font-size:13.6px;line-height:20px;color:#626878;letter-spacing:0.233px;">© Gurtam</div><svg style="left:739.6px;top:687.8px" width="17" height="14" viewBox="0 0 17 14"><rect x="0" y="0" width="16.6" height="13.8" rx="1" fill="#a9adb8"/><rect x="0" y="2.6" width="16.6" height="1.4" fill="#cfd2db"/><rect x="2.4" y="6.6" width="9" height="1.6" fill="#cfd2db"/><rect x="2.4" y="9.6" width="6" height="1.4" fill="#cfd2db"/></svg><svg style="left:772.6px;top:688px" width="23" height="14" viewBox="0 0 23 14"><path d="M0 0H15.4V6H9V12.6H0Z" fill="#a9adb8"/><path d="M1 1L7.7 6.4L14.4 1" fill="none" stroke="#cfd2db" stroke-width="1.3"/><path d="M10.4 9.8H15V7.6L18 10.6L15 13.6V11.4H10.4Z" fill="#a9adb8"/><path d="M22 5.6H18.8V3.6L16 6.4L18.8 9.2V7.2H22Z" fill="#a9adb8"/></svg><svg style="left:812.3px;top:688px" width="16" height="14" viewBox="0 0 16 14"><rect x="0" y="0" width="15.6" height="13.6" rx="1" fill="#a9adb8"/><path d="M1.6 11.6L5.6 6.4L8.4 9.6L10.6 7.6L14 11.6Z" fill="#cfd2db"/><circle cx="11" cy="4" r="1.5" fill="#cfd2db"/></svg><svg style="left:844.8px;top:689px" width="20" height="11" viewBox="0 0 20 11"><rect x="0" y="0" width="8.6" height="10.8" fill="#3f4452"/><rect x="9.8" y="0" width="9.5" height="10.8" fill="#3f4452"/><path d="M1.6 2.4H7M1.6 5.4H7M1.6 8.4H7" stroke="#cfd2db" stroke-width="1.2"/></svg><div class="t" style="left:880.2px;top:683.3px;font-size:14.2px;line-height:20px;color:#636978;letter-spacing:-0.197px;">13:16:21 (+03)</div></div></div><div class="a" style="left:1px;top:4px;width:1px;height:706px;background:#05070b"></div><div class="a" style="left:2px;top:2px;width:985px;height:710px;overflow:hidden;"><div class="a" style="left:403px;top:33px;width:590px;height:643px;background:#fbfbfd"></div><svg style="left:406px;top:36px;will-change:transform" width="579" height="637" viewBox="408 38 579 637" font-family="Liberation Sans, sans-serif"><defs><clipPath id="mc"><rect x="408" y="38" width="579" height="637"/></clipPath></defs><g clip-path="url(#mc)"><rect x="408" y="38" width="579" height="637" fill="#aaceff"/><path d="M405 30 L990 30 L990 232 L979.3 233.8 L973.7 233.1 L971.6 230.3 L968.1 233.8 L961.2 235.9 L954.9 235.9 L952.1 228.9 L950 226.8 L947.2 233.1 L940.3 235.9 L931.9 234.5 L923.6 235.9 L915.2 239.4 L909.6 243.5 L911 246.3 L914.5 247 L918 244.2 L919.4 247.7 L915.9 250.5 L911.7 255.4 L915.9 259.6 L922.2 263 L927 266.5 L920.1 270.7 L919.4 267.2 L913.8 263 L908.2 258.2 L902 258.2 L902.7 263 L899.9 267.9 L895.7 263.7 L890.1 266.5 L884.6 266.5 L876.2 263 L877.6 261 L875.5 256.8 L867.9 254 L862.3 249.8 L858.1 251.2 L856.7 254.7 L848.4 256.1 L840 254.7 L831 250 L819.4 251.5 L818 247 L813.5 251.5 L800.3 257.4 L790 264.7 L778.2 273.5 L766.5 279.4 L756 279.4 L750 289 L743 294 L738.5 306 L734 323.5 L737 338 L741.5 353 L741.3 349 L739.2 347.7 L725.7 345.4 L707.8 340.9 L696.6 332 L692.1 320.8 L688.8 308.5 L680.9 298.4 L669.7 282.7 L658.5 267 L647.3 253.6 L633.9 249.1 L620.5 250.2 L612.6 258 L604.8 270.4 L586.9 262.5 L575.7 251.4 L569 233.4 L560 226.7 L556 222 L542.8 209.4 L534 201 L528.5 197.6 L490.7 197.6 L490.7 209.6 L447 209.4 L408 203 L405 203Z" fill="#e1eed0"/><path d="M408 203 L447 209.4 L490.7 209.6 L490.7 197.6 L528.5 197.6 L534 201 L542.8 209.4 L556 222 L560 226.7 L569 233.4 L575.7 251.4 L586.9 262.5 L604.8 270.4 L612.6 258 L620.5 250.2 L633.9 249.1 L647.3 253.6 L658.5 267 L669.7 282.7 L680.9 298.4 L688.8 308.5 L692.1 320.8 L696.6 332 L707.8 340.9 L725.7 345.4 L739.2 347.7 L741.3 349 L741 349 L736.2 364.7 L731.6 386.2 L727.6 410.9 L727 432.4 L731.6 450.9 L736.2 466.3 L743.9 480.2 L754.7 494.1 L767 506.4 L776.3 521.8 L788.6 531.1 L804 538.8 L810 537.8 L819.4 537.2 L826.9 536.1 L842 531.9 L848.7 528.6 L860.5 528.4 L864 526.2 L873.9 523.3 L882.3 516.8 L889 508.4 L893.2 500.8 L893.6 497.1 L894.4 485.3 L896.1 475.3 L900.3 470.2 L908.7 466 L920.5 463.5 L930.5 461.8 L938.9 458.5 L947.3 456.8 L957.4 458.5 L964.1 460.2 L967.5 457.6 L972.5 458.5 L977.6 461.8 L980.9 466.9 L980.1 473.6 L975.9 480.3 L970.8 485.3 L965.8 492.1 L962.4 498.8 L959.1 503.8 L960.8 510.5 L958.2 515.6 L954.1 522.3 L953.2 530.7 L951.5 537.4 L949 529 L947.3 525.7 L944 530.7 L942.3 532.4 L938.9 534 L933.9 540.8 L926.3 545 L923.8 549.2 L882.6 548 L882.6 561.5 L873.6 562.6 L882.6 568.2 L889.3 576 L894.9 585 L893.8 590.6 L863.5 591.7 L861.3 596.2 L856.8 607.4 L855.7 616.4 L841.8 610 L823.9 596.6 L810.4 587.6 L797 584.3 L785.7 587.6 L772.3 595.5 L756.6 598.8 L740.9 594.3 L725.2 589.9 L707.3 582 L696 576.4 L678 570.8 L662.4 565.2 L649 557.4 L636.9 548 L617.3 539.7 L600.4 532.7 L586.4 522.9 L572.4 514.5 L561.2 506 L552.8 494.8 L548.6 486.4 L554.2 482.2 L557 478 L552.8 475.2 L554.2 469.6 L558.4 462.6 L555.6 455.6 L550 447.2 L545.8 436 L540.2 427.6 L531.4 418.5 L517 400 L503 383.2 L491.8 372 L483.4 363.6 L475 355.2 L465.2 349.6 L468 341.2 L465.2 332.8 L456.8 323 L447 313.2 L435.8 304.8 L428.8 297.8 L421.8 290.8 L413.4 285.2 L405 281 L405 203Z" fill="#e6f8f7" stroke="#b9c2c4" stroke-width=".7"/><path d="M405 325 L413.4 328.6 L417.6 341.2 L421.8 355.2 L427.4 369.2 L435.8 380.4 L441.4 388.8 L449.8 394.5 L459.6 405.6 L462.4 414 L456.8 421 L449.8 425.3 L447 419.7 L444.2 411.3 L438.6 402.9 L433 397.3 L424.6 391.7 L416.2 387.5 L405 383.2Z" fill="#e6f8f7" stroke="#b9c2c4" stroke-width=".7"/><path d="M943 597.4 L956.6 595.1 L974.5 597.4 L990 597.4 L990 643.3 L979 645.6 L974.5 654.5 L965.6 663.5 L958 660 L958.8 652.3 L954.3 645.6 L947.6 642.2 L934.2 636.6 L924 627.6 L924.1 618.7 L929.7 609.7 L938.7 603Z" fill="#e1ecce" stroke="#b9c2c4" stroke-width=".7"/><path d="M958.5 664 L965.6 663.5 L974.5 654.5 L979 645.6 L990 643.3 L990 678 L974 678 L966 671Z" fill="#fffcd8" stroke="#b9c2c4" stroke-width=".7"/><path d="M905 642.2 L911.7 636.6 L915 631 L921.8 627.6 L924 627.6 L934.2 636.6 L947.6 642.2 L954.3 645.6 L957.5 652 L955 656 L947.6 656.8 L929.7 652.3 L914 647.8Z" fill="#e4f6f6" stroke="#b9c2c4" stroke-width=".7"/><path d="M882.6 548 L924.1 548 L924.1 594 L936.4 596.2 L943 597.4 L938.7 603 L929.7 609.7 L924.1 618.7 L921.8 627.6 L915.1 631 L911.7 636.6 L905 642.2 L896 642.2 L884.8 638.8 L871.4 632.1 L862.4 625.4 L855.7 616.4 L856.8 607.4 L861.3 596.2 L863.5 591.7 L893.8 590.6 L894.9 585 L889.3 576 L882.6 568.2 L873.6 562.6 L882.6 561.5Z" fill="#fffcd8" stroke="#b9c2c4" stroke-width=".7"/><path d="M923.8 549.2 L926.3 545 L933.9 540.8 L938.9 534 L942.3 532.4 L944 530.7 L946 529.5 L947.3 534 L948.2 544.1 L946.5 554.2 L944.8 560 L943 571.6 L939.2 582.4 L933.3 589.2 L929.9 593.1 L924 594Z" fill="#d9d6e9" stroke="#b9c2c4" stroke-width=".7"/><ellipse cx="902" cy="237" rx="3.8" ry="1.7" fill="#aaceff"/><ellipse cx="910.5" cy="240.6" rx="1.6" ry="1.2" fill="#aaceff"/><path d="M862 256l3 1.5l-1 1.5l-3-1.5z" fill="#e1eed0"/><ellipse cx="868.6" cy="529.8" rx="7" ry="3.4" transform="rotate(-14 868.6 529.8)" fill="#aaceff" stroke="#b9c2c4" stroke-width=".6"/><path d="M526.6 454.6l1.6 .8l1 2.6l-1.6-.6z M426.4 524.6l1.8 .4l-.6 1.2z" fill="#f2f7ee"/><path d="M974.2 483.9L978.4 482.6L975.9 488.9Z M952.6 548l1.4-3.4l.9.5l-1.5 3.5z M955 558l1-2.4l.8.4l-1 2.4z" fill="#e6f8f7" stroke="#b9c2c4" stroke-width=".5"/><path d="M408 203 L447 209.4 L490.7 209.6 L490.7 197.6 L528.5 197.6 L534 201 L542.8 209.4 L556 222 L560 226.7 L569 233.4 L575.7 251.4 L586.9 262.5 L604.8 270.4 L612.6 258 L620.5 250.2 L633.9 249.1 L647.3 253.6 L658.5 267 L669.7 282.7 L680.9 298.4 L688.8 308.5 L692.1 320.8 L696.6 332 L707.8 340.9 L725.7 345.4 L739.2 347.7 L741.3 349" fill="none" stroke="#a7b1b3" stroke-width=".9"/><path d="M412 103.6 L430 111.6 L450.4 105.3 L463 99 L478 95.2 L493 99 L500.8 106.6 L526 105.8 L546 107.8 L561 110.4 L570.9 111.2 L596 107 L634.7 102.8 L657.7 103.4 L685.7 101.4 L700 97.2 L710.2 95.6 L735.4 93.9" fill="none" stroke="#b6bfce" stroke-width=".85" stroke-linejoin="round"/><path d="M526 105.8 L541 92.5 L556 97.8 L563.8 86.4 L570 72 L576.4 58 L575 48.6 L571.4 38" fill="none" stroke="#b6bfce" stroke-width=".85" stroke-linejoin="round"/><path d="M526 105.8 L523.5 111.6 L519.7 136.8 L510.9 157 L516 172 L526 184.7 L529 196.6" fill="none" stroke="#b6bfce" stroke-width=".85" stroke-linejoin="round"/><path d="M408 186 L420 181 L432 183 L447.8 184.7 L455.4 181 L473 184.7 L480.6 182.2 L490.7 184.7 L523.5 184.2 L529 196.6" fill="none" stroke="#b6bfce" stroke-width=".85" stroke-linejoin="round"/><path d="M408.8 162 L414 170 L420 177 L417.6 193.5 L424 205 L428 217" fill="none" stroke="#b6bfce" stroke-width=".85" stroke-linejoin="round"/><path d="M412 103.6 L414 125 L410 145 L408.8 162" fill="none" stroke="#b6bfce" stroke-width=".85" stroke-linejoin="round"/><path d="M428 217 L425.2 230.4 L424.3 247.2 L426.8 259 L427.7 267.4 L428.5 297.6" fill="none" stroke="#b6bfce" stroke-width=".85" stroke-linejoin="round"/><path d="M408.4 227 L425.2 230.4" fill="none" stroke="#b6bfce" stroke-width=".85" stroke-linejoin="round"/><path d="M460.5 210.3 L447 215.3 L430.2 223.7 L425.2 230.4" fill="none" stroke="#b6bfce" stroke-width=".85" stroke-linejoin="round"/><path d="M480.6 210.3 L490.7 222 L497.4 233.8 L509.2 243.9 L522.6 250.6 L531 258.2" fill="none" stroke="#b6bfce" stroke-width=".85" stroke-linejoin="round"/><path d="M529 196.8 L529.4 213.6 L528.5 230.4 L531 247.2 L532 259 L537.8 280 L551.4 290.8 L564.8 314.4 L581.6 334.5 L595 348 L598.5 357.4" fill="none" stroke="#b6bfce" stroke-width=".85" stroke-linejoin="round"/><path d="M427.7 267.4 L448.7 280 L463.8 280.8 L475.6 287.6 L484 285 L490.7 288.4 L505.8 285 L519.3 284.2 L537.8 280" fill="none" stroke="#b6bfce" stroke-width=".85" stroke-linejoin="round"/><path d="M529 196.8 L544.5 211 L556.3 215.3 L566.3 217 L584.9 216.3 L601.7 209.3 L624 198 L649.3 186.9 L668.9 178.5 L700 179.9 L710.2 179.6 L737 170.5" fill="none" stroke="#b6bfce" stroke-width=".85" stroke-linejoin="round"/><path d="M584.9 216.3 L612.9 220.5 L652 223.3 L690 226.5 L701.8 250 L712 260" fill="none" stroke="#b6bfce" stroke-width=".85" stroke-linejoin="round"/><path d="M598.5 357.4 L598.5 368 L591.7 378.3 L600 390.8" fill="none" stroke="#b6bfce" stroke-width=".85" stroke-linejoin="round"/><path d="M591.7 378.3 L575 391.7 L558 401.8 L541.3 415.3 L531 417" fill="none" stroke="#b6bfce" stroke-width=".85" stroke-linejoin="round"/><path d="M428.6 298.2 L443.7 314.4 L453.8 327.8 L467.3 344.6 L480.7 358 L497.5 368.2 L509.3 376.6 L517.7 391.7 L531 417" fill="none" stroke="#b6bfce" stroke-width=".85" stroke-linejoin="round"/><path d="M687.6 308.6 L684 326 L679.2 344.6 L669 358" fill="none" stroke="#b6bfce" stroke-width=".85" stroke-linejoin="round"/><path d="M655 442.2 L659.3 455.6 L667.7 469.6 L673.3 486.4 L680 497.6 L684.8 491.2 L693.8 500.2 L697.2 509.6" fill="none" stroke="#b6bfce" stroke-width=".85" stroke-linejoin="round"/><path d="M638.3 467.7 L625.7 464 L614.5 475.2 L601 478.9" fill="none" stroke="#b6bfce" stroke-width=".85" stroke-linejoin="round"/><path d="M601 478.9 L586.4 472.4 L572.4 464 L561.2 452.8 L554.2 436 L544.4 427.6 L531 417" fill="none" stroke="#b6bfce" stroke-width=".85" stroke-linejoin="round"/><path d="M531 417 L544.4 406.6 L566.8 399.6 L578 388.4 L587.8 380 L591.7 378.3" fill="none" stroke="#b6bfce" stroke-width=".85" stroke-linejoin="round"/><path d="M601 478.9 L597.6 492 L597.6 506 L592 513.9" fill="none" stroke="#b6bfce" stroke-width=".85" stroke-linejoin="round"/><path d="M638.3 467.7 L650.9 480.8 L680 482.2 L684.8 491.2" fill="none" stroke="#b6bfce" stroke-width=".85" stroke-linejoin="round"/><path d="M655 442.2 L646 452 L638.3 467.7" fill="none" stroke="#b6bfce" stroke-width=".85" stroke-linejoin="round"/><path d="M601 478.9 L620 488 L636.9 494.8 L653.7 497.6 L662.4 498 L678 501.3 L697.2 509.6" fill="none" stroke="#b6bfce" stroke-width=".85" stroke-linejoin="round"/><path d="M640 510.3 L655 509 L670 507 L680 503.2" fill="none" stroke="#b6bfce" stroke-width=".85" stroke-linejoin="round"/><path d="M697.2 509.6 L714 513.6 L729.7 521.5 L740.9 524.8 L747.6 521.5 L757 522" fill="none" stroke="#b6bfce" stroke-width=".85" stroke-linejoin="round"/><path d="M697.2 509.6 L693.8 524.8 L696 538.3 L691.6 551.7 L687 563 L679.2 570.8" fill="none" stroke="#b6bfce" stroke-width=".85" stroke-linejoin="round"/><path d="M729.7 521.5 L734.2 536 L737.5 549.5 L745.4 558.5 L752.8 565.9 L765.6 576.4 L779 583 L797 584.3 L810.4 578.7 L832.8 573.7" fill="none" stroke="#b6bfce" stroke-width=".85" stroke-linejoin="round"/><path d="M856.9 608 L869.7 618.8 L890.5 628.2 L914 635 L923 645.7 L940 650 L955 655" fill="none" stroke="#b6bfce" stroke-width=".85" stroke-linejoin="round"/><path d="M897.2 598 L910.7 618 L914 635" fill="none" stroke="#b6bfce" stroke-width=".85" stroke-linejoin="round"/><path d="M910.7 618 L925 612 L941 601.3" fill="none" stroke="#b6bfce" stroke-width=".85" stroke-linejoin="round"/><path d="M941 601.3 L954.4 614.8 L971.2 624.9 L990 628" fill="none" stroke="#b6bfce" stroke-width=".85" stroke-linejoin="round"/><path d="M954.4 614.8 L950 630 L958 645 L975 650 L990 660" fill="none" stroke="#b6bfce" stroke-width=".85" stroke-linejoin="round"/><path d="M737 170.5 L743 185 L741.5 203 L734 217.6 L728 236.8 L722 247 L712 260 L701.8 267.6 L694.4 282 L687.6 308.6" fill="none" stroke="#b6bfce" stroke-width=".85" stroke-linejoin="round"/><path d="M737 170.5 L753 172 L760.6 191 L769.4 208.8 L778.2 226.5 L782.6 248.5" fill="none" stroke="#b6bfce" stroke-width=".85" stroke-linejoin="round"/><path d="M712 260 L734 254.4 L757.6 251.5 L782.6 248.5 L807.7 241.8 L834.6 236.8 L858.1 233.4 L879 231.7 L898.5 235 L925.4 231.7 L948.9 225 L987.6 221.6" fill="none" stroke="#b6bfce" stroke-width=".85" stroke-linejoin="round"/><path d="M712 260 L715 273.5 L725.3 288 L735.6 303 L729.7 317.6 L728.2 338 L734.7 350.2" fill="none" stroke="#b6bfce" stroke-width=".85" stroke-linejoin="round"/><path d="M737 170.5 L754.7 171 L774 176.3 L801.8 177 L818.8 178 L851.4 178 L878.3 180.6 L900.2 183 L925.4 181.3 L952.3 172.9 L975.8 157.8 L987.6 147.7" fill="none" stroke="#b6bfce" stroke-width=".85" stroke-linejoin="round"/><path d="M737 170.5 L741.5 159 L742 147.7 L742 124 L735.4 93.9 L737 63.6 L738.8 38" fill="none" stroke="#b6bfce" stroke-width=".85" stroke-linejoin="round"/><path d="M753 172 L769.4 161.8 L787 156 L807.7 151 L834.6 134.2 L854.8 115.7" fill="none" stroke="#b6bfce" stroke-width=".85" stroke-linejoin="round"/><path d="M818.8 178 L834.6 198.1 L851.4 213.2 L858.1 228.4 L879 231.7" fill="none" stroke="#b6bfce" stroke-width=".85" stroke-linejoin="round"/><path d="M769.7 78.1 L750.5 87.2 L735.4 93.9" fill="none" stroke="#b6bfce" stroke-width=".85" stroke-linejoin="round"/><path d="M735.4 95.5 L764 99 L790.9 95.6 L824.5 100.6 L848 105.6 L854.8 115.7 L878.3 114 L904.2 105.7" fill="none" stroke="#b6bfce" stroke-width=".85" stroke-linejoin="round"/><path d="M769.7 78.1 L787.5 63.6 L804.3 53.5 L831.2 46.8 L841.3 38" fill="none" stroke="#b6bfce" stroke-width=".85" stroke-linejoin="round"/><path d="M904.2 105.7 L911.9 80.4 L916 56.9 L911.9 38" fill="none" stroke="#b6bfce" stroke-width=".85" stroke-linejoin="round"/><path d="M904.2 105.7 L925.4 93.9 L952.3 83.8 L977.5 77.1" fill="none" stroke="#b6bfce" stroke-width=".85" stroke-linejoin="round"/><path d="M904.2 105.7 L906.9 117.4 L910.2 144.3 L903.5 171.2 L900.2 183 L893.4 204.8 L892.8 231.7" fill="none" stroke="#b6bfce" stroke-width=".85" stroke-linejoin="round"/><path d="M977.5 77.1 L975.8 114 L975.8 151 L982.5 164.5 L987.6 179.6" fill="none" stroke="#b6bfce" stroke-width=".85" stroke-linejoin="round"/><path d="M987.6 204.8 L959 221.7 L945.6 228.4" fill="none" stroke="#b6bfce" stroke-width=".85" stroke-linejoin="round"/><path d="M690 98.9 L710.2 95.6" fill="none" stroke="#b6bfce" stroke-width=".85" stroke-linejoin="round"/><path d="M668.6 366 L670.6 386.9 L662.7 404.5 L666.7 422.2 L660.8 435.9 L653.9 442.7" fill="none" stroke="#b6bfce" stroke-width=".85" stroke-linejoin="round"/><path d="M672 362 L678.4 366.3 L686.3 375.1 L689.2 388.8 L698 396.7 L697 404.5 L703.9 416.3 L715.7 430 L725.1 439.4 L729.4 455.5 L735.3 470 L736.2 478.7 L745.5 487.9 L757.8 500.2" fill="none" stroke="#b6bfce" stroke-width=".85" stroke-linejoin="round"/><path d="M698 396.7 L705.9 393.7 L713.7 384.9 L721.6 373.1 L727.5 361.4 L733.3 350.6" fill="none" stroke="#b6bfce" stroke-width=".85" stroke-linejoin="round"/><path d="M669 358 L676.5 357.5 L692.2 353.5 L709.8 347.6 L721.6 343.7 L733.3 350.6" fill="none" stroke="#b6bfce" stroke-width=".85" stroke-linejoin="round"/><path d="M598.5 357.4 L613.7 355.5 L629.4 356.5 L645.1 361.4 L660 362" fill="none" stroke="#b6bfce" stroke-width=".85" stroke-linejoin="round"/><path d="M600 390.8 L609.8 406.5 L613.7 420.2 L625.5 432 L627.5 447.6 L625.5 459.4 L637.3 467.3" fill="none" stroke="#b6bfce" stroke-width=".85" stroke-linejoin="round"/><path d="M627.5 447.6 L639.2 457.5 L629.4 465.3" fill="none" stroke="#b6bfce" stroke-width=".85" stroke-linejoin="round"/><path d="M912.9 471.9 L927.2 476.1 L940.6 478.6 L954 476.1 L967.5 472.8 L976.7 466.9" fill="none" stroke="#b6bfce" stroke-width=".85" stroke-linejoin="round"/><path d="M912.9 471.9 L905.3 483.7 L898.6 498.8 L893.1 500" fill="none" stroke="#b6bfce" stroke-width=".85" stroke-linejoin="round"/><path d="M893.1 500 L888.6 510.5 L880.2 518.9 L873.9 522.7 L863.8 527.7 L855.4 528.6 L843.7 531.1 L840.3 536.9 L838.6 544.5 L825.2 545 L813.4 543.3 L797 542.8 L779 536 L765.6 531.6" fill="none" stroke="#b6bfce" stroke-width=".85" stroke-linejoin="round"/><path d="M976.7 466.9 L970.8 482 L960.8 495.4 L950.7 505.5 L947.3 520.6 L942.3 529 L938.9 540.8 L940.6 554.2 L938 566" fill="none" stroke="#b6bfce" stroke-width=".85" stroke-linejoin="round"/><path d="M838.6 544.5 L837.8 550.4 L834.4 556.3 L838.6 563.8 L840.3 570.5 L839.5 574.7 L833.1 573.9 L825.2 573.9 L816.8 578.9 L810 584" fill="none" stroke="#b6bfce" stroke-width=".85" stroke-linejoin="round"/><path d="M839.5 574.7 L850.4 584 L857.1 590.7 L860.5 597.4 L857.1 604.1 L867.2 607.5 L869.7 617.6" fill="none" stroke="#b6bfce" stroke-width=".85" stroke-linejoin="round"/><path d="M785.7 586 L800 585.7 L816.8 590.7 L833.6 600.8 L850.4 614.2 L855.4 620" fill="none" stroke="#b6bfce" stroke-width=".85" stroke-linejoin="round"/><text x="619.4" y="404.5" text-anchor="middle" textLength="36.4" lengthAdjust="spacingAndGlyphs" style="font-size:10.9px;font-style:italic;" fill="none" stroke="#eefaf9" stroke-width="1.2" stroke-linejoin="round" opacity="1">Mexico</text><text x="619.4" y="404.5" text-anchor="middle" textLength="36.4" lengthAdjust="spacingAndGlyphs" style="font-size:10.9px;font-style:italic;" fill="#5a5e66">Mexico</text><text x="958.6" y="612.7" text-anchor="start" textLength="51" lengthAdjust="spacingAndGlyphs" style="font-size:10.4px;font-style:italic;" fill="none" stroke="#eef3e2" stroke-width="1.6" stroke-linejoin="round" opacity="1">Honduras</text><text x="958.6" y="612.7" text-anchor="start" textLength="51" lengthAdjust="spacingAndGlyphs" style="font-size:10.4px;font-style:italic;" fill="#5d626b">Honduras</text><text x="929.5" y="360" text-anchor="middle" textLength="66" lengthAdjust="spacingAndGlyphs" style="font-size:10.5px;font-style:italic;" fill="none" stroke="#bcd6fd" stroke-width="1.4" stroke-linejoin="round" opacity="1">Gulf of Mexico</text><text x="929.5" y="360" text-anchor="middle" textLength="66" lengthAdjust="spacingAndGlyphs" style="font-size:10.5px;font-style:italic;" fill="#2f62c4">Gulf of Mexico</text><circle cx="769" cy="77" r="2.9" fill="#fff" stroke="#4a5162" stroke-width="1"/><circle cx="526" cy="106" r="2.9" fill="#fff" stroke="#4a5162" stroke-width="1"/><circle cx="635" cy="103" r="2.9" fill="#fff" stroke="#4a5162" stroke-width="1"/><circle cx="904" cy="106" r="2.9" fill="#fff" stroke="#4a5162" stroke-width="1"/><circle cx="737" cy="170" r="2.9" fill="#fff" stroke="#4a5162" stroke-width="1"/><circle cx="819" cy="178" r="2.9" fill="#fff" stroke="#4a5162" stroke-width="1"/><circle cx="900" cy="183" r="2.9" fill="#fff" stroke="#4a5162" stroke-width="1"/><circle cx="529" cy="197" r="2.9" fill="#fff" stroke="#4a5162" stroke-width="1"/><circle cx="728" cy="236" r="2.9" fill="#fff" stroke="#4a5162" stroke-width="1"/><circle cx="879" cy="232" r="2.9" fill="#fff" stroke="#4a5162" stroke-width="1"/><circle cx="783" cy="249" r="2.9" fill="#fff" stroke="#4a5162" stroke-width="1"/><circle cx="428" cy="267.5" r="2.9" fill="#fff" stroke="#4a5162" stroke-width="1"/><circle cx="538" cy="280" r="2.9" fill="#fff" stroke="#4a5162" stroke-width="1"/><circle cx="428.5" cy="298" r="2.9" fill="#fff" stroke="#4a5162" stroke-width="1"/><circle cx="688" cy="308.5" r="2.9" fill="#fff" stroke="#4a5162" stroke-width="1"/><circle cx="736" cy="303" r="2.9" fill="#fff" stroke="#4a5162" stroke-width="1"/><circle cx="734" cy="350" r="2.9" fill="#fff" stroke="#4a5162" stroke-width="1"/><circle cx="599" cy="357.5" r="2.9" fill="#fff" stroke="#4a5162" stroke-width="1"/><circle cx="509" cy="376" r="2.9" fill="#fff" stroke="#4a5162" stroke-width="1"/><circle cx="442" cy="394" r="2.9" fill="#fff" stroke="#4a5162" stroke-width="1"/><circle cx="531" cy="417.5" r="2.9" fill="#fff" stroke="#4a5162" stroke-width="1"/><circle cx="654" cy="443" r="2.9" fill="#fff" stroke="#4a5162" stroke-width="1"/><circle cx="725" cy="440" r="2.9" fill="#fff" stroke="#4a5162" stroke-width="1"/><circle cx="638" cy="468" r="2.9" fill="#fff" stroke="#4a5162" stroke-width="1"/><circle cx="913" cy="472" r="2.9" fill="#fff" stroke="#4a5162" stroke-width="1"/><circle cx="893" cy="500" r="2.9" fill="#fff" stroke="#4a5162" stroke-width="1"/><circle cx="679" cy="571" r="2.9" fill="#fff" stroke="#4a5162" stroke-width="1"/><circle cx="753" cy="566" r="2.9" fill="#fff" stroke="#4a5162" stroke-width="1"/><circle cx="833" cy="573" r="2.9" fill="#fff" stroke="#4a5162" stroke-width="1"/><circle cx="870" cy="619" r="2.9" fill="#fff" stroke="#4a5162" stroke-width="1"/><circle cx="412" cy="103.6" r="2.9" fill="#fff" stroke="#4a5162" stroke-width="1"/><circle cx="977" cy="76" r="2.9" fill="#fff" stroke="#4a5162" stroke-width="1"/><circle cx="987" cy="181" r="2.9" fill="#fff" stroke="#4a5162" stroke-width="1"/><circle cx="978" cy="467" r="2.9" fill="#fff" stroke="#4a5162" stroke-width="1"/><circle cx="601" cy="479" r="2.9" fill="#fff" stroke="#4a5162" stroke-width="1"/><circle cx="592" cy="514" r="2.9" fill="#fff" stroke="#4a5162" stroke-width="1"/><circle cx="697" cy="510.2" r="4.2" fill="#fff" stroke="#3b4150" stroke-width="1"/><circle cx="697" cy="510.2" r="1.7" fill="#3b4150"/><circle cx="932" cy="562" r="4.2" fill="#fff" stroke="#3b4150" stroke-width="1"/><circle cx="932" cy="562" r="1.7" fill="#3b4150"/><circle cx="922" cy="646" r="4.2" fill="#fff" stroke="#3b4150" stroke-width="1"/><circle cx="922" cy="646" r="1.7" fill="#3b4150"/><text x="769" y="88.4" text-anchor="middle" textLength="22" lengthAdjust="spacingAndGlyphs" style="font-size:10px;" fill="none" stroke="#fff" stroke-width="2.4" stroke-linejoin="round" opacity="1">Tulsa</text><text x="769" y="88.4" text-anchor="middle" textLength="22" lengthAdjust="spacingAndGlyphs" style="font-size:10px;" fill="#23262c">Tulsa</text><text x="526" y="117.4" text-anchor="middle" textLength="52" lengthAdjust="spacingAndGlyphs" style="font-size:10px;" fill="none" stroke="#fff" stroke-width="2.4" stroke-linejoin="round" opacity="1">Albuquerque</text><text x="526" y="117.4" text-anchor="middle" textLength="52" lengthAdjust="spacingAndGlyphs" style="font-size:10px;" fill="#23262c">Albuquerque</text><text x="635.5" y="114.4" text-anchor="middle" textLength="36" lengthAdjust="spacingAndGlyphs" style="font-size:10px;" fill="none" stroke="#fff" stroke-width="2.4" stroke-linejoin="round" opacity="1">Amarillo</text><text x="635.5" y="114.4" text-anchor="middle" textLength="36" lengthAdjust="spacingAndGlyphs" style="font-size:10px;" fill="#23262c">Amarillo</text><text x="904.5" y="117.4" text-anchor="middle" textLength="38" lengthAdjust="spacingAndGlyphs" style="font-size:10px;" fill="none" stroke="#fff" stroke-width="2.4" stroke-linejoin="round" opacity="1">Memphis</text><text x="904.5" y="117.4" text-anchor="middle" textLength="38" lengthAdjust="spacingAndGlyphs" style="font-size:10px;" fill="#23262c">Memphis</text><text x="737" y="181.4" text-anchor="middle" textLength="37" lengthAdjust="spacingAndGlyphs" style="font-size:10px;" fill="none" stroke="#fff" stroke-width="2.4" stroke-linejoin="round" opacity="1">Ft. Worth</text><text x="737" y="181.4" text-anchor="middle" textLength="37" lengthAdjust="spacingAndGlyphs" style="font-size:10px;" fill="#23262c">Ft. Worth</text><text x="819.5" y="189.4" text-anchor="middle" textLength="46" lengthAdjust="spacingAndGlyphs" style="font-size:10px;" fill="none" stroke="#fff" stroke-width="2.4" stroke-linejoin="round" opacity="1">Shreveport</text><text x="819.5" y="189.4" text-anchor="middle" textLength="46" lengthAdjust="spacingAndGlyphs" style="font-size:10px;" fill="#23262c">Shreveport</text><text x="900.5" y="194.4" text-anchor="middle" textLength="33" lengthAdjust="spacingAndGlyphs" style="font-size:10px;" fill="none" stroke="#fff" stroke-width="2.4" stroke-linejoin="round" opacity="1">Jackson</text><text x="900.5" y="194.4" text-anchor="middle" textLength="33" lengthAdjust="spacingAndGlyphs" style="font-size:10px;" fill="#23262c">Jackson</text><text x="529" y="207.9" text-anchor="middle" textLength="28" lengthAdjust="spacingAndGlyphs" style="font-size:10px;" fill="none" stroke="#fff" stroke-width="2.4" stroke-linejoin="round" opacity="1">El Paso</text><text x="529" y="207.9" text-anchor="middle" textLength="28" lengthAdjust="spacingAndGlyphs" style="font-size:10px;" fill="#23262c">El Paso</text><text x="728" y="247.4" text-anchor="middle" textLength="26" lengthAdjust="spacingAndGlyphs" style="font-size:10px;" fill="none" stroke="#fff" stroke-width="2.4" stroke-linejoin="round" opacity="1">Austin</text><text x="728" y="247.4" text-anchor="middle" textLength="26" lengthAdjust="spacingAndGlyphs" style="font-size:10px;" fill="#23262c">Austin</text><text x="879.5" y="243.4" text-anchor="middle" textLength="53" lengthAdjust="spacingAndGlyphs" style="font-size:10px;" fill="none" stroke="#fff" stroke-width="2.4" stroke-linejoin="round" opacity="1">Baton Rouge</text><text x="879.5" y="243.4" text-anchor="middle" textLength="53" lengthAdjust="spacingAndGlyphs" style="font-size:10px;" fill="#23262c">Baton Rouge</text><text x="783" y="260.4" text-anchor="middle" textLength="34" lengthAdjust="spacingAndGlyphs" style="font-size:10px;" fill="none" stroke="#fff" stroke-width="2.4" stroke-linejoin="round" opacity="1">Houston</text><text x="783" y="260.4" text-anchor="middle" textLength="34" lengthAdjust="spacingAndGlyphs" style="font-size:10px;" fill="#23262c">Houston</text><text x="429.5" y="278.9" text-anchor="middle" textLength="42" lengthAdjust="spacingAndGlyphs" style="font-size:10px;" fill="none" stroke="#fff" stroke-width="2.4" stroke-linejoin="round" opacity="1">Hermosillo</text><text x="429.5" y="278.9" text-anchor="middle" textLength="42" lengthAdjust="spacingAndGlyphs" style="font-size:10px;" fill="#23262c">Hermosillo</text><text x="538" y="291.4" text-anchor="middle" textLength="43" lengthAdjust="spacingAndGlyphs" style="font-size:10px;" fill="none" stroke="#fff" stroke-width="2.4" stroke-linejoin="round" opacity="1">Chihuahua</text><text x="538" y="291.4" text-anchor="middle" textLength="43" lengthAdjust="spacingAndGlyphs" style="font-size:10px;" fill="#23262c">Chihuahua</text><text x="428.5" y="309.4" text-anchor="middle" textLength="36" lengthAdjust="spacingAndGlyphs" style="font-size:10px;" fill="none" stroke="#fff" stroke-width="2.4" stroke-linejoin="round" opacity="1">Guaymas</text><text x="428.5" y="309.4" text-anchor="middle" textLength="36" lengthAdjust="spacingAndGlyphs" style="font-size:10px;" fill="#23262c">Guaymas</text><text x="688" y="320.4" text-anchor="middle" textLength="30" lengthAdjust="spacingAndGlyphs" style="font-size:10px;" fill="none" stroke="#fff" stroke-width="2.4" stroke-linejoin="round" opacity="1">Laredo</text><text x="688" y="320.4" text-anchor="middle" textLength="30" lengthAdjust="spacingAndGlyphs" style="font-size:10px;" fill="#23262c">Laredo</text><text x="736.5" y="314.4" text-anchor="middle" textLength="56" lengthAdjust="spacingAndGlyphs" style="font-size:10px;" fill="none" stroke="#fff" stroke-width="2.4" stroke-linejoin="round" opacity="1">Corpus Christi</text><text x="736.5" y="314.4" text-anchor="middle" textLength="56" lengthAdjust="spacingAndGlyphs" style="font-size:10px;" fill="#23262c">Corpus Christi</text><text x="734.5" y="361.4" text-anchor="middle" textLength="47" lengthAdjust="spacingAndGlyphs" style="font-size:10px;" fill="none" stroke="#fff" stroke-width="2.4" stroke-linejoin="round" opacity="1">Matamoros</text><text x="734.5" y="361.4" text-anchor="middle" textLength="47" lengthAdjust="spacingAndGlyphs" style="font-size:10px;" fill="#23262c">Matamoros</text><text x="599" y="368.9" text-anchor="middle" textLength="33" lengthAdjust="spacingAndGlyphs" style="font-size:10px;" fill="none" stroke="#fff" stroke-width="2.4" stroke-linejoin="round" opacity="1">Torreon</text><text x="599" y="368.9" text-anchor="middle" textLength="33" lengthAdjust="spacingAndGlyphs" style="font-size:10px;" fill="#23262c">Torreon</text><text x="509" y="387.9" text-anchor="middle" textLength="36" lengthAdjust="spacingAndGlyphs" style="font-size:10px;" fill="none" stroke="#fff" stroke-width="2.4" stroke-linejoin="round" opacity="1">Culiacan</text><text x="509" y="387.9" text-anchor="middle" textLength="36" lengthAdjust="spacingAndGlyphs" style="font-size:10px;" fill="#23262c">Culiacan</text><text x="442.5" y="404.9" text-anchor="middle" textLength="26" lengthAdjust="spacingAndGlyphs" style="font-size:10px;" fill="none" stroke="#fff" stroke-width="2.4" stroke-linejoin="round" opacity="1">La Paz</text><text x="442.5" y="404.9" text-anchor="middle" textLength="26" lengthAdjust="spacingAndGlyphs" style="font-size:10px;" fill="#23262c">La Paz</text><text x="531" y="427.9" text-anchor="middle" textLength="38" lengthAdjust="spacingAndGlyphs" style="font-size:10px;" fill="none" stroke="#fff" stroke-width="2.4" stroke-linejoin="round" opacity="1">Mazatlan</text><text x="531" y="427.9" text-anchor="middle" textLength="38" lengthAdjust="spacingAndGlyphs" style="font-size:10px;" fill="#23262c">Mazatlan</text><text x="654" y="454.4" text-anchor="middle" textLength="60" lengthAdjust="spacingAndGlyphs" style="font-size:10px;" fill="none" stroke="#fff" stroke-width="2.4" stroke-linejoin="round" opacity="1">San Luis Potosi</text><text x="654" y="454.4" text-anchor="middle" textLength="60" lengthAdjust="spacingAndGlyphs" style="font-size:10px;" fill="#23262c">San Luis Potosi</text><text x="725" y="451.4" text-anchor="middle" textLength="35" lengthAdjust="spacingAndGlyphs" style="font-size:10px;" fill="none" stroke="#fff" stroke-width="2.4" stroke-linejoin="round" opacity="1">Tampico</text><text x="725" y="451.4" text-anchor="middle" textLength="35" lengthAdjust="spacingAndGlyphs" style="font-size:10px;" fill="#23262c">Tampico</text><text x="638.5" y="478.9" text-anchor="middle" textLength="20" lengthAdjust="spacingAndGlyphs" style="font-size:10px;" fill="none" stroke="#fff" stroke-width="2.4" stroke-linejoin="round" opacity="1">Leon</text><text x="638.5" y="478.9" text-anchor="middle" textLength="20" lengthAdjust="spacingAndGlyphs" style="font-size:10px;" fill="#23262c">Leon</text><text x="913.5" y="483.4" text-anchor="middle" textLength="28" lengthAdjust="spacingAndGlyphs" style="font-size:10px;" fill="none" stroke="#fff" stroke-width="2.4" stroke-linejoin="round" opacity="1">Merida</text><text x="913.5" y="483.4" text-anchor="middle" textLength="28" lengthAdjust="spacingAndGlyphs" style="font-size:10px;" fill="#23262c">Merida</text><text x="893.5" y="511.4" text-anchor="middle" textLength="45" lengthAdjust="spacingAndGlyphs" style="font-size:10px;" fill="none" stroke="#fff" stroke-width="2.4" stroke-linejoin="round" opacity="1">Campeche</text><text x="893.5" y="511.4" text-anchor="middle" textLength="45" lengthAdjust="spacingAndGlyphs" style="font-size:10px;" fill="#23262c">Campeche</text><text x="679.5" y="581.9" text-anchor="middle" textLength="36" lengthAdjust="spacingAndGlyphs" style="font-size:10px;" fill="none" stroke="#fff" stroke-width="2.4" stroke-linejoin="round" opacity="1">Acapulco</text><text x="679.5" y="581.9" text-anchor="middle" textLength="36" lengthAdjust="spacingAndGlyphs" style="font-size:10px;" fill="#23262c">Acapulco</text><text x="753" y="577.4" text-anchor="middle" textLength="32" lengthAdjust="spacingAndGlyphs" style="font-size:10px;" fill="none" stroke="#fff" stroke-width="2.4" stroke-linejoin="round" opacity="1">Oaxaca</text><text x="753" y="577.4" text-anchor="middle" textLength="32" lengthAdjust="spacingAndGlyphs" style="font-size:10px;" fill="#23262c">Oaxaca</text><text x="833.5" y="584.4" text-anchor="middle" textLength="64" lengthAdjust="spacingAndGlyphs" style="font-size:10px;" fill="none" stroke="#fff" stroke-width="2.4" stroke-linejoin="round" opacity="1">Tuxtla Gutierrez</text><text x="833.5" y="584.4" text-anchor="middle" textLength="64" lengthAdjust="spacingAndGlyphs" style="font-size:10px;" fill="#23262c">Tuxtla Gutierrez</text><text x="870.5" y="630.4" text-anchor="middle" textLength="65" lengthAdjust="spacingAndGlyphs" style="font-size:10px;" fill="none" stroke="#fff" stroke-width="2.4" stroke-linejoin="round" opacity="1">Quetzaltenango</text><text x="870.5" y="630.4" text-anchor="middle" textLength="65" lengthAdjust="spacingAndGlyphs" style="font-size:10px;" fill="#23262c">Quetzaltenango</text><text x="412" y="115.6" text-anchor="middle" textLength="38" lengthAdjust="spacingAndGlyphs" style="font-size:10px;" fill="none" stroke="#fff" stroke-width="2.4" stroke-linejoin="round" opacity="1">Flagstaff</text><text x="412" y="115.6" text-anchor="middle" textLength="38" lengthAdjust="spacingAndGlyphs" style="font-size:10px;" fill="#23262c">Flagstaff</text><text x="418.5" y="160" text-anchor="end" textLength="35" lengthAdjust="spacingAndGlyphs" style="font-size:10px;" fill="none" stroke="#fff" stroke-width="2.4" stroke-linejoin="round" opacity="1">Phoenix</text><text x="418.5" y="160" text-anchor="end" textLength="35" lengthAdjust="spacingAndGlyphs" style="font-size:10px;" fill="#23262c">Phoenix</text><text x="415.5" y="197.5" text-anchor="start" textLength="32" lengthAdjust="spacingAndGlyphs" style="font-size:10px;" fill="none" stroke="#fff" stroke-width="2.4" stroke-linejoin="round" opacity="1">Tucson</text><text x="415.5" y="197.5" text-anchor="start" textLength="32" lengthAdjust="spacingAndGlyphs" style="font-size:10px;" fill="#23262c">Tucson</text><text x="428.5" y="221" text-anchor="middle" textLength="33" lengthAdjust="spacingAndGlyphs" style="font-size:10px;" fill="none" stroke="#fff" stroke-width="2.4" stroke-linejoin="round" opacity="1">Nogales</text><text x="428.5" y="221" text-anchor="middle" textLength="33" lengthAdjust="spacingAndGlyphs" style="font-size:10px;" fill="#23262c">Nogales</text><text x="960" y="88" text-anchor="start" textLength="42" lengthAdjust="spacingAndGlyphs" style="font-size:10px;" fill="none" stroke="#fff" stroke-width="2.4" stroke-linejoin="round" opacity="1">Nashville</text><text x="960" y="88" text-anchor="start" textLength="42" lengthAdjust="spacingAndGlyphs" style="font-size:10px;" fill="#23262c">Nashville</text><text x="963" y="192" text-anchor="start" textLength="56" lengthAdjust="spacingAndGlyphs" style="font-size:10px;" fill="none" stroke="#fff" stroke-width="2.4" stroke-linejoin="round" opacity="1">Montgomery</text><text x="963" y="192" text-anchor="start" textLength="56" lengthAdjust="spacingAndGlyphs" style="font-size:10px;" fill="#23262c">Montgomery</text><text x="962" y="479" text-anchor="start" textLength="34" lengthAdjust="spacingAndGlyphs" style="font-size:10px;" fill="none" stroke="#fff" stroke-width="2.4" stroke-linejoin="round" opacity="1">Cancun</text><text x="962" y="479" text-anchor="start" textLength="34" lengthAdjust="spacingAndGlyphs" style="font-size:10px;" fill="#23262c">Cancun</text><text x="669" y="366" text-anchor="middle" textLength="41" lengthAdjust="spacingAndGlyphs" style="font-size:10px;" fill="none" stroke="#fff" stroke-width="2.4" stroke-linejoin="round" opacity="1">Monterrey</text><text x="669" y="366" text-anchor="middle" textLength="41" lengthAdjust="spacingAndGlyphs" style="font-size:10px;" fill="#23262c">Monterrey</text><text x="577.5" y="491.3" text-anchor="start" textLength="54" lengthAdjust="spacingAndGlyphs" style="font-size:10px;" fill="none" stroke="#fff" stroke-width="2.4" stroke-linejoin="round" opacity="1">Guadalajara</text><text x="577.5" y="491.3" text-anchor="start" textLength="54" lengthAdjust="spacingAndGlyphs" style="font-size:10px;" fill="#23262c">Guadalajara</text><text x="698" y="524" text-anchor="middle" textLength="51" lengthAdjust="spacingAndGlyphs" style="font-size:10px;" fill="none" stroke="#fff" stroke-width="2.4" stroke-linejoin="round" opacity="1">Mexico City</text><text x="698" y="524" text-anchor="middle" textLength="51" lengthAdjust="spacingAndGlyphs" style="font-size:10px;" fill="#23262c">Mexico City</text><text x="764.5" y="526.2" text-anchor="middle" textLength="36" lengthAdjust="spacingAndGlyphs" style="font-size:10px;" fill="none" stroke="#fff" stroke-width="2.4" stroke-linejoin="round" opacity="1">Veracruz</text><text x="764.5" y="526.2" text-anchor="middle" textLength="36" lengthAdjust="spacingAndGlyphs" style="font-size:10px;" fill="#23262c">Veracruz</text><text x="932.4" y="575.5" text-anchor="middle" textLength="46" lengthAdjust="spacingAndGlyphs" style="font-size:10.4px;" fill="none" stroke="#fff" stroke-width="2.4" stroke-linejoin="round" opacity="1">Belmopan</text><text x="932.4" y="575.5" text-anchor="middle" textLength="46" lengthAdjust="spacingAndGlyphs" style="font-size:10.4px;" fill="#23262c">Belmopan</text><text x="922.2" y="660" text-anchor="middle" textLength="60" lengthAdjust="spacingAndGlyphs" style="font-size:10px;" fill="none" stroke="#fff" stroke-width="2.4" stroke-linejoin="round" opacity="1">San Salvador</text><text x="922.2" y="660" text-anchor="middle" textLength="60" lengthAdjust="spacingAndGlyphs" style="font-size:10px;" fill="#23262c">San Salvador</text><path d="M420.7 602V643.6M420.7 622.9H468M468 602V623.8M459 622.9V643.6" fill="none" stroke="#0d0f12" stroke-width="2"/><text x="428.3" y="615" text-anchor="start" textLength="33" lengthAdjust="spacingAndGlyphs" style="font-size:10px;font-weight:bold;" fill="#1f2228">200 km</text><text x="425.2" y="637.3" text-anchor="start" textLength="30" lengthAdjust="spacingAndGlyphs" style="font-size:10px;font-weight:bold;" fill="#1f2228">100 mi</text><text x="420.7" y="657" text-anchor="start" textLength="213.5" lengthAdjust="spacingAndGlyphs" style="font-size:9.4px;font-weight:bold;" fill="#1d2026">Mapping data © 2021 HERE. All rights reserved.</text><text x="780" y="658" text-anchor="start" textLength="195" lengthAdjust="spacingAndGlyphs" style="font-size:10.3px;font-weight:bold;" fill="#18244c">N 12° 43.1545' : W -086° 07.3878'</text><path d="M691.6 323.9 L675.2 335.8 L682.5 336.4 L684.4 343.7 Z" fill="#0cf60c" stroke="#0a9c0e" stroke-width=".7" stroke-linejoin="round"/><g transform="translate(669 353.8)"><path d="M-8 -9.5Q-8 -16 -3.5 -16H3.5Q8 -16 8 -9.5V11Q8 16 3 16H-3Q-8 16 -8 11Z" fill="#e5432f"/><path d="M-5.2 -14.6Q0 -16.2 5.2 -14.6L5.8 -9.4Q0 -11.8 -5.8 -9.4Z" fill="#f3846c"/><path d="M-8 -5.6L-10.2 -4.4L-8 -3.4Z M8 -5.6L10.2 -4.4L8 -3.4Z" fill="#d6382a"/><path d="M-6.4 -4Q-6.4 -8.4 0 -8.6Q6.4 -8.4 6.4 -4V9.6Q6.4 12.6 0 12.8Q-6.4 12.6 -6.4 9.6Z" fill="#3d2f30"/><path d="M-5.2 -3.6Q-4.6 -7.6 0 -7.7Q4.6 -7.6 5.2 -3.6L4.2 -1.2H-4.2Z" fill="#7c7c7e"/><path d="M-2 -7.2Q2 -7.4 4.2 -5.4L3.4 -1.6H-1Z" fill="#97979a"/><rect x="-4.8" y="-1.2" width="9.6" height="8.4" rx="1" fill="#fbcbc3"/><path d="M-4.4 7.6H4.4L4.8 10Q0 12.6 -4.8 10Z" fill="#68686b"/><path d="M-7 -12Q-6.6 -14.4 -4.6 -15M7 -12Q6.6 -14.4 4.6 -15" fill="none" stroke="#f6a08c" stroke-width="1"/></g><text x="669.3" y="384.8" text-anchor="middle" textLength="49.8" lengthAdjust="spacingAndGlyphs" style="font-size:12.1px;font-weight:bold;" fill="none" stroke="#fff" stroke-width="2.2" stroke-linejoin="round" opacity="1">26S900</text><text x="669.3" y="384.8" text-anchor="middle" textLength="49.8" lengthAdjust="spacingAndGlyphs" style="font-size:12.1px;font-weight:bold;" fill="#ff0a0a">26S900</text><path d="M591.2 479.3 L611.7 482.6 L605.5 485.5 L606.5 493.6 Z" fill="#0cf60c" stroke="#0a9c0e" stroke-width=".7" stroke-linejoin="round"/><g transform="translate(625.1 495.8)"><path d="M-8 -9.5Q-8 -16 -3.5 -16H3.5Q8 -16 8 -9.5V11Q8 16 3 16H-3Q-8 16 -8 11Z" fill="#e5432f"/><path d="M-5.2 -14.6Q0 -16.2 5.2 -14.6L5.8 -9.4Q0 -11.8 -5.8 -9.4Z" fill="#f3846c"/><path d="M-8 -5.6L-10.2 -4.4L-8 -3.4Z M8 -5.6L10.2 -4.4L8 -3.4Z" fill="#d6382a"/><path d="M-6.4 -4Q-6.4 -8.4 0 -8.6Q6.4 -8.4 6.4 -4V9.6Q6.4 12.6 0 12.8Q-6.4 12.6 -6.4 9.6Z" fill="#3d2f30"/><path d="M-5.2 -3.6Q-4.6 -7.6 0 -7.7Q4.6 -7.6 5.2 -3.6L4.2 -1.2H-4.2Z" fill="#7c7c7e"/><path d="M-2 -7.2Q2 -7.4 4.2 -5.4L3.4 -1.6H-1Z" fill="#97979a"/><rect x="-4.8" y="-1.2" width="9.6" height="8.4" rx="1" fill="#fbcbc3"/><path d="M-4.4 7.6H4.4L4.8 10Q0 12.6 -4.8 10Z" fill="#68686b"/><path d="M-7 -12Q-6.6 -14.4 -4.6 -15M7 -12Q6.6 -14.4 4.6 -15" fill="none" stroke="#f6a08c" stroke-width="1"/></g><path d="M746.8 543 L750.5 528.7 L754 533.7 L760.5 534.4 Z" fill="#0cf60c" stroke="#0a9c0e" stroke-width=".7" stroke-linejoin="round"/><g transform="translate(764.9 516)"><path d="M-8 -9.5Q-8 -16 -3.5 -16H3.5Q8 -16 8 -9.5V11Q8 16 3 16H-3Q-8 16 -8 11Z" fill="#e5432f"/><path d="M-5.2 -14.6Q0 -16.2 5.2 -14.6L5.8 -9.4Q0 -11.8 -5.8 -9.4Z" fill="#f3846c"/><path d="M-8 -5.6L-10.2 -4.4L-8 -3.4Z M8 -5.6L10.2 -4.4L8 -3.4Z" fill="#d6382a"/><path d="M-6.4 -4Q-6.4 -8.4 0 -8.6Q6.4 -8.4 6.4 -4V9.6Q6.4 12.6 0 12.8Q-6.4 12.6 -6.4 9.6Z" fill="#3d2f30"/><path d="M-5.2 -3.6Q-4.6 -7.6 0 -7.7Q4.6 -7.6 5.2 -3.6L4.2 -1.2H-4.2Z" fill="#7c7c7e"/><path d="M-2 -7.2Q2 -7.4 4.2 -5.4L3.4 -1.6H-1Z" fill="#97979a"/><rect x="-4.8" y="-1.2" width="9.6" height="8.4" rx="1" fill="#fbcbc3"/><path d="M-4.4 7.6H4.4L4.8 10Q0 12.6 -4.8 10Z" fill="#68686b"/><path d="M-7 -12Q-6.6 -14.4 -4.6 -15M7 -12Q6.6 -14.4 4.6 -15" fill="none" stroke="#f6a08c" stroke-width="1"/></g><text x="625" y="526.8" text-anchor="middle" textLength="108" lengthAdjust="spacingAndGlyphs" style="font-size:12.1px;font-weight:bold;" fill="none" stroke="#fff" stroke-width="2.2" stroke-linejoin="round" opacity="1">&amp;SERVMU3837P</text><text x="625" y="526.8" text-anchor="middle" textLength="108" lengthAdjust="spacingAndGlyphs" style="font-size:12.1px;font-weight:bold;" fill="#ff0a0a">&amp;SERVMU3837P</text><text x="765.5" y="546.6" text-anchor="middle" textLength="60" lengthAdjust="spacingAndGlyphs" style="font-size:12.1px;font-weight:bold;" fill="none" stroke="#fff" stroke-width="2.2" stroke-linejoin="round" opacity="1">PR5506A</text><text x="765.5" y="546.6" text-anchor="middle" textLength="60" lengthAdjust="spacingAndGlyphs" style="font-size:12.1px;font-weight:bold;" fill="#ff0a0a">PR5506A</text></g></svg><div class="a" style="left:406px;top:36px;width:590px;height:637px;box-shadow:inset 2px 2px 4px rgba(70,80,60,.45)"></div><div class="a" style="left:418px;top:48px;width:28px;height:28px;background:#fff;border-radius:4px;box-shadow:0 0 3px rgba(0,0,0,.18)"></div><div class="a" style="left:418px;top:84px;width:28px;height:28px;background:#fff;border-radius:4px;box-shadow:0 0 3px rgba(0,0,0,.18)"></div><div class="a" style="left:418px;top:120px;width:28px;height:28px;background:#fff;border-radius:4px;box-shadow:0 0 3px rgba(0,0,0,.18)"></div><div class="a" style="left:418px;top:156px;width:28px;height:56px;background:#fff;border-radius:4px;box-shadow:0 0 3px rgba(0,0,0,.18)"></div><div class="a" style="left:418px;top:184px;width:28px;height:1px;background:#e4e6ea"></div><svg style="left:418px;top:48px" width="28" height="28"><circle cx="12.6" cy="12.6" r="4.6" fill="none" stroke="#4d5a7c" stroke-width="1.3"/><path d="M16 16L20.2 20.2" stroke="#4d5a7c" stroke-width="1.4"/></svg><svg style="left:418px;top:84px" width="28" height="28"><path d="M6.4 14Q14 5.6 21.6 14Q14 22.4 6.4 14Z" fill="none" stroke="#4d5a7c" stroke-width="1.2"/><circle cx="14" cy="13.6" r="3.4" fill="#4d5a7c"/><circle cx="13" cy="12.4" r="1" fill="#fff"/></svg><svg style="left:418px;top:120px" width="28" height="28"><path d="M7 9.6L11 8V18.4L7 20Z M12 8L16 9.6V20L12 18.4Z M17 9.6L21 8V18.4L17 20Z" fill="#4d5a7c"/></svg><svg style="left:418px;top:156px" width="28" height="56"><path d="M9.2 14H18.8M14 9.2V18.8" stroke="#4d5a7c" stroke-width="1.7"/><path d="M9.2 43H18.8" stroke="#4d5a7c" stroke-width="1.7"/></svg><div class="a" style="left:428.2px;top:225px;width:7.6px;height:168px;border-radius:4px;background:rgba(112,128,156,.6)"></div><div class="a" style="left:424px;top:368px;width:16px;height:16px;border-radius:4.5px;background:#fff;box-shadow:0 0 2px rgba(0,0,0,.2)"></div></div><div class="a" style="left:403px;top:33px;width:591px;height:647px;border:2px solid #5fe0ec;border-right-color:#7df6fe;border-radius:4px"></div><div class="a" style="left:996px;top:354.6px;width:18px;height:4.4px;background:#0b1f47;border-top:1.2px solid #fff;border-bottom:1.2px solid #fff"></div><div class="a" style="left:988.6px;top:352.4px;width:9px;height:9px;border-radius:50%;background:#0b1f47;border:1.3px solid #fff"></div><div class="a" style="left:1012px;top:335.2px;width:64.8px;height:43.8px;border-radius:6px;background:#0b1f47;border:2.3px solid #fff"></div><div class="t" style="left:1024.4px;top:347.3px;font-size:15.2px;line-height:20px;color:#f2f4f8;letter-spacing:0.495px;">Mapa</div></body></html>
